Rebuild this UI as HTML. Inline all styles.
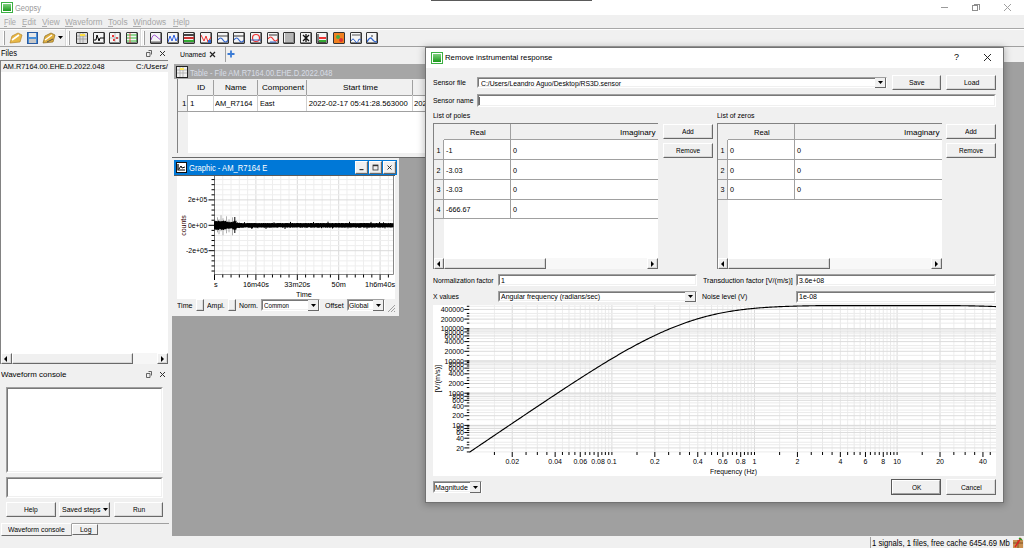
<!DOCTYPE html>
<html><head><meta charset="utf-8"><style>
html,body{margin:0;padding:0;}
body{width:1024px;height:548px;overflow:hidden;position:relative;background:#f0f0f0;font-family:"Liberation Sans", sans-serif;}
.a{position:absolute;}
.t{white-space:pre;}
.ti{width:12px;height:12px;box-sizing:border-box;border:1px solid #333;border-radius:1px;background:#f4f4f4;box-shadow:inset -1px -1px 0 #888;}
.ti svg{position:absolute;left:0px;top:0px;}
</style></head><body>
<div class="a" style="left:0px;top:0px;width:1024px;height:15px;background:#ffffff;"></div>
<div class="a" style="left:0px;top:15px;width:1024px;height:532px;background:#f0f0f0;"></div>
<div class="a" style="left:431px;top:0px;width:161px;height:1px;background:#5a5a5a;"></div>
<div class="a" style="left:1px;top:2px;width:12px;height:11px;box-sizing:border-box;background:#fff;border:1px solid #3cb043;"></div>
<div class="a" style="left:3px;top:4px;width:8px;height:7px;box-sizing:border-box;background:linear-gradient(180deg,#7fd07f,#1a9a1a);"></div>
<div class="a t" style="left:15.00px;top:3.89px;font-size:8.4px;line-height:8.4px;color:#9a9a9a;transform:scaleX(0.898);transform-origin:0 0;">Geopsy</div>
<div class="a" style="left:941px;top:7px;width:7px;height:1px;background:#9a9a9a;"></div>
<div class="a" style="left:972px;top:5px;width:6px;height:6px;box-sizing:border-box;border:1px solid #8e8e8e;"></div>
<div class="a" style="left:974px;top:4px;width:6px;height:6px;box-sizing:border-box;border-top:1px solid #8e8e8e;border-right:1px solid #8e8e8e;"></div>
<svg class="a" style="left:1003px;top:3px" width="9" height="9"><path d="M1 1L8 8M8 1L1 8" stroke="#a0a0a0" stroke-width="1"/></svg>
<div class="a t" style="left:3.60px;top:18.10px;font-size:8.5px;line-height:8.5px;color:#a6a6a6;transform:scaleX(0.876);transform-origin:0 0;">File</div>
<div class="a" style="left:3.6px;top:26px;width:3px;height:1px;background:#b0b0b0;"></div>
<div class="a t" style="left:22.00px;top:18.10px;font-size:8.5px;line-height:8.5px;color:#a6a6a6;transform:scaleX(0.956);transform-origin:0 0;">Edit</div>
<div class="a" style="left:22px;top:26px;width:4px;height:1px;background:#b0b0b0;"></div>
<div class="a t" style="left:42.00px;top:18.10px;font-size:8.5px;line-height:8.5px;color:#a6a6a6;transform:scaleX(0.974);transform-origin:0 0;">View</div>
<div class="a" style="left:42px;top:26px;width:5px;height:1px;background:#b0b0b0;"></div>
<div class="a t" style="left:65.00px;top:18.10px;font-size:8.5px;line-height:8.5px;color:#a6a6a6;transform:scaleX(0.976);transform-origin:0 0;">Waveform</div>
<div class="a" style="left:65px;top:26px;width:8px;height:1px;background:#b0b0b0;"></div>
<div class="a t" style="left:107.80px;top:18.10px;font-size:8.5px;line-height:8.5px;color:#a6a6a6;transform:scaleX(0.988);transform-origin:0 0;">Tools</div>
<div class="a" style="left:107.8px;top:26px;width:5px;height:1px;background:#b0b0b0;"></div>
<div class="a t" style="left:133.20px;top:18.10px;font-size:8.5px;line-height:8.5px;color:#a6a6a6;transform:scaleX(0.963);transform-origin:0 0;">Windows</div>
<div class="a" style="left:133.2px;top:26px;width:8px;height:1px;background:#b0b0b0;"></div>
<div class="a t" style="left:172.80px;top:18.10px;font-size:8.5px;line-height:8.5px;color:#a6a6a6;transform:scaleX(0.950);transform-origin:0 0;">Help</div>
<div class="a" style="left:172.8px;top:26px;width:5px;height:1px;background:#b0b0b0;"></div>
<div class="a" style="left:0px;top:28px;width:1024px;height:1px;background:#a8a8a8;"></div>
<div class="a" style="left:0px;top:29px;width:1024px;height:1px;background:#ffffff;"></div>
<div class="a" style="left:0px;top:46px;width:1024px;height:1px;background:#a0a0a0;"></div>
<div class="a" style="left:3px;top:31px;width:1px;height:14px;background:#ffffff;"></div>
<div class="a" style="left:4px;top:31px;width:1px;height:14px;background:#a0a0a0;"></div>
<svg class="a" style="left:9px;top:31px" width="14" height="14"><path d="M1 12 L3 5 L9 2 L13 4 L11 11 Z" fill="#e8b845" stroke="#b8862a" stroke-width="0.7"/><path d="M3 9 L10 4" stroke="#fff" stroke-width="1.6"/></svg>
<svg class="a" style="left:27px;top:32px" width="11" height="12"><rect x="0.5" y="0.5" width="10" height="11" fill="#4a90d9" stroke="#2a5aa0"/><rect x="2" y="1" width="7" height="4" fill="#e8e8e8"/><rect x="2" y="7" width="7" height="4" fill="#c8c8c8"/></svg>
<svg class="a" style="left:42px;top:31px" width="14" height="14"><path d="M1 12 L3 5 L9 2 L13 4 L11 11 Z" fill="#e0b040" stroke="#8a6a20" stroke-width="0.7"/><path d="M3 9 L10 4" stroke="#fff" stroke-width="1.4"/><path d="M5 11 L11 8" stroke="#555" stroke-width="1"/></svg>
<svg class="a" style="left:58px;top:36px" width="6" height="4"><path d="M0 0H5L2.5 3Z" fill="#000"/></svg>
<div class="a" style="left:65px;top:29px;width:1px;height:17px;background:#d8d8d8;"></div>
<div class="a" style="left:66px;top:29px;width:1px;height:17px;background:#ffffff;"></div>
<div class="a" style="left:68px;top:31px;width:1px;height:14px;background:#ffffff;"></div>
<div class="a" style="left:69px;top:31px;width:1px;height:14px;background:#a0a0a0;"></div>
<div class="a ti" style="left:76px;top:32px"><svg width="10" height="10"><rect x="0" y="0" width="10" height="10" fill="#ddd"/><path d="M0 3H10M0 6H10M3 0V10M6 0V10" stroke="#999" stroke-width="0.8"/><rect x="3" y="1" width="5" height="2" fill="#ffe040"/></svg></div>
<div class="a ti" style="left:93px;top:32px"><svg width="10" height="10"><path d="M0 7L2 7L3 2L5 8L6 5L10 5" stroke="#000" fill="none" stroke-width="1"/></svg></div>
<div class="a ti" style="left:109px;top:32px"><svg width="10" height="10"><path d="M2 2h2v2h-2zM6 4h2v2h-2zM3 6h2v2h-2z" fill="#e33"/><path d="M0 5H10M5 0V10" stroke="#999" stroke-width="0.6"/></svg></div>
<div class="a ti" style="left:126px;top:32px"><svg width="10" height="10"><path d="M0 2H10M0 5H10M0 8H10" stroke="#3b3" stroke-width="1"/><path d="M3 0V10" stroke="#e33" stroke-width="0.8"/></svg></div>
<div class="a" style="left:140px;top:29px;width:1px;height:17px;background:#d8d8d8;"></div>
<div class="a" style="left:141px;top:29px;width:1px;height:17px;background:#ffffff;"></div>
<div class="a" style="left:143px;top:31px;width:1px;height:14px;background:#ffffff;"></div>
<div class="a" style="left:144px;top:31px;width:1px;height:14px;background:#a0a0a0;"></div>
<div class="a ti" style="left:150px;top:32px"><svg width="10" height="10"><path d="M0 7Q2 0 5 3T10 7" stroke="#a050d0" fill="none"/><path d="M0 9H10" stroke="#666"/></svg></div>
<div class="a ti" style="left:167px;top:32px"><svg width="10" height="10"><path d="M0 9L2 3L4 8L6 2L8 8L10 4" stroke="#3060e0" fill="none"/></svg></div>
<div class="a ti" style="left:183px;top:32px"><svg width="10" height="10"><rect x="0" y="1" width="10" height="2" fill="#444"/><rect x="0" y="4" width="10" height="2" fill="#c33"/><rect x="0" y="7" width="10" height="2" fill="#3a3"/></svg></div>
<div class="a ti" style="left:200px;top:32px"><svg width="10" height="10"><path d="M0 2L3 8L5 3L7 9L10 4" stroke="#e33" fill="none"/><rect x="7" y="7" width="3" height="3" fill="#36c"/></svg></div>
<div class="a ti" style="left:217px;top:32px"><svg width="10" height="10"><path d="M0 3H10" stroke="#444"/><path d="M0 7Q2.5 3 5 7T10 7" stroke="#36c" fill="none" stroke-width="1.2"/></svg></div>
<div class="a ti" style="left:233px;top:32px"><svg width="10" height="10"><path d="M0 3H10" stroke="#333"/><path d="M0 7Q2.5 3 5 7T10 7" stroke="#36c" fill="none" stroke-width="1.2"/></svg></div>
<div class="a ti" style="left:250px;top:32px"><svg width="10" height="10"><circle cx="5" cy="5" r="3.5" stroke="#e33" fill="none" stroke-width="1.2"/><path d="M0 7H10" stroke="#36c"/></svg></div>
<div class="a ti" style="left:267px;top:32px"><svg width="10" height="10"><path d="M1 2H9" stroke="#333"/><path d="M0 6Q2.5 2 5 6T10 6" stroke="#e33" fill="none" stroke-width="1.2"/><path d="M2 9H8" stroke="#36c"/></svg></div>
<div class="a ti" style="left:283px;top:32px"><svg width="10" height="10"><path d="M1 1H9M1 3H9M1 5H9M1 7H9M1 9H9" stroke="#555" stroke-width="0.8"/></svg></div>
<div class="a ti" style="left:300px;top:32px"><svg width="10" height="10"><path d="M2 2L8 8M8 2L2 8M5 1V9" stroke="#111" stroke-width="1.3"/></svg></div>
<div class="a ti" style="left:316px;top:32px"><svg width="10" height="10"><path d="M1 1V9H9" stroke="#111" fill="none"/><rect x="2" y="4" width="7" height="2" fill="#e33"/><rect x="2" y="7" width="7" height="2" fill="#3a3"/></svg></div>
<div class="a ti" style="left:333px;top:32px"><svg width="10" height="10"><rect width="10" height="10" fill="#f08020"/><circle cx="4" cy="4" r="2" fill="#4a4"/><circle cx="7" cy="7" r="2" fill="#d33"/></svg></div>
<div class="a ti" style="left:350px;top:32px"><svg width="10" height="10"><path d="M1 2H9" stroke="#555"/><path d="M0 8Q2 4 4 8T8 6L10 7" stroke="#36c" fill="none"/></svg></div>
<div class="a ti" style="left:366px;top:32px"><svg width="10" height="10"><path d="M0 9Q3 3 5 6T10 9" stroke="#36c" fill="none" stroke-width="1.3"/><circle cx="5" cy="3" r="1" fill="#777"/></svg></div>
<div class="a t" style="left:1.00px;top:50.06px;font-size:8.2px;line-height:8.2px;color:#000;transform:scaleX(0.924);transform-origin:0 0;">Files</div>
<svg class="a" style="left:146px;top:50px" width="6" height="7"><path d="M2.5 0.5H5.5V4.5M0.5 2.5H4V6.5H0.5Z" stroke="#555" fill="none" stroke-width="0.9"/></svg>
<svg class="a" style="left:158.5px;top:50px" width="7" height="7"><path d="M1 1L6 6M6 1L1 6" stroke="#333" stroke-width="1"/></svg>
<div class="a" style="left:0px;top:60px;width:168px;height:304px;box-sizing:border-box;background:#fff;border-top:1px solid #828282;border-left:1px solid #828282;"></div>
<div class="a" style="left:1px;top:61px;width:167px;height:11px;background:#f0f0f0;"></div>
<div class="a t" style="left:3.00px;top:62.53px;font-size:8px;line-height:8px;color:#000;transform:scaleX(0.913);transform-origin:0 0;">AM.R7164.00.EHE.D.2022.048</div>
<div class="a t" style="left:136.00px;top:62.53px;font-size:8px;line-height:8px;color:#000;transform:scaleX(0.960);transform-origin:0 0;">C:/Users/</div>
<div class="a" style="left:1px;top:353px;width:167px;height:11px;background:#f0f0f0;"></div>
<div class="a" style="left:1px;top:353px;width:11px;height:11px;box-sizing:border-box;background:#f0f0f0;border-top:1px solid #fff;border-left:1px solid #fff;border-right:1px solid #696969;border-bottom:1px solid #696969;"></div>
<div class="a" style="left:2px;top:354px;width:9px;height:9px;box-sizing:border-box;border-right:1px solid #d8d8d8;border-bottom:1px solid #d8d8d8;"></div>
<svg class="a" style="left:4px;top:356px" width="4" height="6"><path d="M3 0V6L0 3Z" fill="#000"/></svg>
<div class="a" style="left:12px;top:353px;width:121px;height:11px;box-sizing:border-box;background:#f0f0f0;border-top:1px solid #fff;border-left:1px solid #fff;border-right:1px solid #696969;border-bottom:1px solid #696969;"></div>
<div class="a" style="left:13px;top:354px;width:119px;height:9px;box-sizing:border-box;border-right:1px solid #d8d8d8;border-bottom:1px solid #d8d8d8;"></div>
<div class="a" style="left:133px;top:353px;width:24px;height:11px;background:#f6f6f6;"></div>
<div class="a" style="left:157px;top:353px;width:11px;height:11px;box-sizing:border-box;background:#f0f0f0;border-top:1px solid #fff;border-left:1px solid #fff;border-right:1px solid #696969;border-bottom:1px solid #696969;"></div>
<div class="a" style="left:158px;top:354px;width:9px;height:9px;box-sizing:border-box;border-right:1px solid #d8d8d8;border-bottom:1px solid #d8d8d8;"></div>
<svg class="a" style="left:161px;top:356px" width="4" height="6"><path d="M0 0V6L3 3Z" fill="#000"/></svg>
<div class="a t" style="left:1.00px;top:371.14px;font-size:8.1px;line-height:8.1px;color:#000;transform:scaleX(0.981);transform-origin:0 0;">Waveform console</div>
<svg class="a" style="left:146px;top:371px" width="6" height="7"><path d="M2.5 0.5H5.5V4.5M0.5 2.5H4V6.5H0.5Z" stroke="#555" fill="none" stroke-width="0.9"/></svg>
<svg class="a" style="left:158.5px;top:371px" width="7" height="7"><path d="M1 1L6 6M6 1L1 6" stroke="#333" stroke-width="1"/></svg>
<div class="a" style="left:6px;top:387px;width:157px;height:86px;box-sizing:border-box;background:#fff;border-top:1px solid #a0a0a0;border-left:1px solid #a0a0a0;border-right:1px solid #fff;border-bottom:1px solid #fff;"></div>
<div class="a" style="left:7px;top:388px;width:155px;height:84px;box-sizing:border-box;border-top:1px solid #787878;border-left:1px solid #787878;border-right:1px solid #f0f0f0;border-bottom:1px solid #f0f0f0;"></div>
<div class="a" style="left:6px;top:477px;width:157px;height:21px;box-sizing:border-box;background:#fff;border-top:1px solid #a0a0a0;border-left:1px solid #a0a0a0;border-right:1px solid #fff;border-bottom:1px solid #fff;"></div>
<div class="a" style="left:7px;top:478px;width:155px;height:19px;box-sizing:border-box;border-top:1px solid #787878;border-left:1px solid #787878;border-right:1px solid #f0f0f0;border-bottom:1px solid #f0f0f0;"></div>
<div class="a" style="left:6px;top:502px;width:50px;height:15px;box-sizing:border-box;background:#f0f0f0;border-top:1px solid #fff;border-left:1px solid #fff;border-right:1px solid #696969;border-bottom:1px solid #696969;"></div>
<div class="a" style="left:7px;top:503px;width:48px;height:13px;box-sizing:border-box;border-right:1px solid #d8d8d8;border-bottom:1px solid #d8d8d8;"></div>
<div class="a t" style="left:24.10px;top:506.24px;font-size:7.4px;line-height:7.4px;color:#000;transform:scaleX(0.900);transform-origin:0 0;">Help</div>
<div class="a" style="left:59px;top:502px;width:51px;height:15px;box-sizing:border-box;background:#f0f0f0;border-top:1px solid #fff;border-left:1px solid #fff;border-right:1px solid #696969;border-bottom:1px solid #696969;"></div>
<div class="a" style="left:60px;top:503px;width:49px;height:13px;box-sizing:border-box;border-right:1px solid #d8d8d8;border-bottom:1px solid #d8d8d8;"></div>
<div class="a t" style="left:61.90px;top:506.24px;font-size:7.4px;line-height:7.4px;color:#000;transform:scaleX(0.945);transform-origin:0 0;">Saved steps</div>
<svg class="a" style="left:102.5px;top:508px" width="5" height="3"><path d="M0 0H5L2.5 3Z" fill="#000"/></svg>
<div class="a" style="left:114px;top:502px;width:49px;height:15px;box-sizing:border-box;background:#f0f0f0;border-top:1px solid #fff;border-left:1px solid #fff;border-right:1px solid #696969;border-bottom:1px solid #696969;"></div>
<div class="a" style="left:115px;top:503px;width:47px;height:13px;box-sizing:border-box;border-right:1px solid #d8d8d8;border-bottom:1px solid #d8d8d8;"></div>
<div class="a t" style="left:132.60px;top:506.24px;font-size:7.4px;line-height:7.4px;color:#000;transform:scaleX(0.899);transform-origin:0 0;">Run</div>
<div class="a" style="left:71px;top:523px;width:98px;height:1px;background:#a0a0a0;"></div>
<div class="a" style="left:1px;top:523px;width:71px;height:13px;box-sizing:border-box;background:#f0f0f0;border-top:1px solid #fff;border-left:1px solid #fff;border-right:1px solid #a0a0a0;border-bottom:1px solid #696969;"></div>
<div class="a t" style="left:8.00px;top:525.74px;font-size:7.4px;line-height:7.4px;color:#000;transform:scaleX(0.931);transform-origin:0 0;">Waveform console</div>
<div class="a" style="left:72px;top:524px;width:26px;height:11px;box-sizing:border-box;background:#f0f0f0;border-top:1px solid #fff;border-left:1px solid #fff;border-right:1px solid #696969;border-bottom:1px solid #696969;"></div>
<div class="a t" style="left:80.40px;top:525.74px;font-size:7.4px;line-height:7.4px;color:#000;transform:scaleX(0.939);transform-origin:0 0;">Log</div>
<div class="a" style="left:172px;top:47px;width:54px;height:15px;box-sizing:border-box;background:#f0f0f0;border-right:1px solid #a0a0a0;"></div>
<div class="a t" style="left:179.60px;top:50.53px;font-size:8px;line-height:8px;color:#000;transform:scaleX(0.853);transform-origin:0 0;">Unamed</div>
<svg class="a" style="left:209px;top:51px" width="7" height="7"><path d="M1 1L6 6M6 1L1 6" stroke="#222" stroke-width="1.2"/></svg>
<svg class="a" style="left:227px;top:50px" width="8" height="8"><path d="M4 0.5V7.5M0.5 4H7.5" stroke="#3a7bd5" stroke-width="1.8"/></svg>
<div class="a" style="left:172px;top:62px;width:852px;height:474px;background:#a0a0a0;"></div>
<div class="a" style="left:172px;top:62px;width:831px;height:96px;background:#f0f0f0;"></div>
<div class="a" style="left:174px;top:64px;width:829px;height:15px;background:#a6a6a6;"></div>
<div class="a" style="left:172px;top:157px;width:254px;height:1px;background:#696969;"></div>
<div class="a" style="left:176px;top:66px;width:12px;height:12px;box-sizing:border-box;background:#eee;border:1px solid #222;"></div>
<svg class="a" style="left:177px;top:67px" width="10" height="10"><path d="M0 3H10M0 6H10M3 0V10M6 0V10" stroke="#aaa" stroke-width="0.8"/><rect x="3" y="1" width="4" height="2" fill="#ffe860"/></svg>
<div class="a t" style="left:189.70px;top:68.97px;font-size:8.3px;line-height:8.3px;color:#d8dde6;transform:scaleX(0.903);transform-origin:0 0;">Table - File AM.R7164.00.EHE.D.2022.048</div>
<div class="a" style="left:177px;top:79px;width:250px;height:74px;background:#fff;"></div>
<div class="a" style="left:177px;top:79px;width:1px;height:74px;background:#828282;"></div>
<div class="a" style="left:178px;top:79px;width:249px;height:16px;background:#f0f0f0;"></div>
<div class="a" style="left:178px;top:95px;width:10px;height:58px;background:#f0f0f0;"></div>
<div class="a" style="left:188px;top:95px;width:239px;height:1px;background:#a0a0a0;"></div>
<div class="a" style="left:178px;top:111px;width:249px;height:1px;background:#a0a0a0;"></div>
<div class="a" style="left:213px;top:80px;width:1px;height:15px;background:#a0a0a0;"></div>
<div class="a" style="left:213px;top:95px;width:1px;height:16px;background:#d0d0d0;"></div>
<div class="a" style="left:257px;top:80px;width:1px;height:15px;background:#a0a0a0;"></div>
<div class="a" style="left:257px;top:95px;width:1px;height:16px;background:#d0d0d0;"></div>
<div class="a" style="left:306px;top:80px;width:1px;height:15px;background:#a0a0a0;"></div>
<div class="a" style="left:306px;top:95px;width:1px;height:16px;background:#d0d0d0;"></div>
<div class="a" style="left:412px;top:80px;width:1px;height:15px;background:#a0a0a0;"></div>
<div class="a" style="left:412px;top:95px;width:1px;height:16px;background:#d0d0d0;"></div>
<div class="a" style="left:187px;top:95px;width:1px;height:16px;background:#a0a0a0;"></div>
<div class="a t" style="left:196.70px;top:84.23px;font-size:8px;line-height:8px;color:#000;transform:scaleX(1.038);transform-origin:0 0;">ID</div>
<div class="a t" style="left:225.20px;top:84.23px;font-size:8px;line-height:8px;color:#000;transform:scaleX(1.007);transform-origin:0 0;">Name</div>
<div class="a t" style="left:261.70px;top:84.23px;font-size:8px;line-height:8px;color:#000;transform:scaleX(1.015);transform-origin:0 0;">Component</div>
<div class="a t" style="left:342.60px;top:84.23px;font-size:8px;line-height:8px;color:#000;transform:scaleX(1.020);transform-origin:0 0;">Start time</div>
<div class="a t" style="left:182.00px;top:100.23px;font-size:8px;line-height:8px;color:#000;">1</div>
<div class="a t" style="left:190.00px;top:100.23px;font-size:8px;line-height:8px;color:#000;">1</div>
<div class="a t" style="left:215.40px;top:100.23px;font-size:8px;line-height:8px;color:#000;transform:scaleX(0.937);transform-origin:0 0;">AM_R7164</div>
<div class="a t" style="left:259.90px;top:100.23px;font-size:8px;line-height:8px;color:#000;transform:scaleX(0.906);transform-origin:0 0;">East</div>
<div class="a t" style="left:308.70px;top:100.48px;font-size:7.7px;line-height:7.7px;color:#000;">2022-02-17 05:41:28.563000</div>
<div class="a t" style="left:414.00px;top:100.48px;font-size:7.7px;line-height:7.7px;color:#000;">2022</div>
<div class="a" style="left:172px;top:158px;width:227px;height:158px;background:#f0f0f0;"></div>
<div class="a" style="left:174px;top:160px;width:223px;height:15px;background:#0078d7;"></div>
<div class="a" style="left:176px;top:162px;width:11px;height:11px;box-sizing:border-box;background:#fff;border:1px solid #111;"></div>
<svg class="a" style="left:177px;top:163px" width="9" height="9"><path d="M1 1V7H8" stroke="#000" fill="none" stroke-width="1.2"/><path d="M2 6L4 3L5 5L8 4" stroke="#000" fill="none"/></svg>
<div class="a t" style="left:188.90px;top:164.27px;font-size:8.3px;line-height:8.3px;color:#ffffff;transform:scaleX(0.919);transform-origin:0 0;">Graphic - AM_R7164 E</div>
<div class="a" style="left:355px;top:161px;width:13px;height:13px;box-sizing:border-box;background:#f0f0f0;border-top:1px solid #fff;border-left:1px solid #fff;border-right:1px solid #696969;border-bottom:1px solid #696969;"></div>
<div class="a" style="left:356px;top:162px;width:11px;height:11px;box-sizing:border-box;border-right:1px solid #d8d8d8;border-bottom:1px solid #d8d8d8;"></div>
<div class="a" style="left:369px;top:161px;width:13px;height:13px;box-sizing:border-box;background:#f0f0f0;border-top:1px solid #fff;border-left:1px solid #fff;border-right:1px solid #696969;border-bottom:1px solid #696969;"></div>
<div class="a" style="left:370px;top:162px;width:11px;height:11px;box-sizing:border-box;border-right:1px solid #d8d8d8;border-bottom:1px solid #d8d8d8;"></div>
<div class="a" style="left:383px;top:161px;width:13px;height:13px;box-sizing:border-box;background:#f0f0f0;border-top:1px solid #fff;border-left:1px solid #fff;border-right:1px solid #696969;border-bottom:1px solid #696969;"></div>
<div class="a" style="left:384px;top:162px;width:11px;height:11px;box-sizing:border-box;border-right:1px solid #d8d8d8;border-bottom:1px solid #d8d8d8;"></div>
<svg class="a" style="left:358px;top:164px" width="7" height="7"><rect x="1.5" y="5" width="4" height="1.2" fill="#333"/></svg>
<svg class="a" style="left:372px;top:164px" width="7" height="7"><rect x="1" y="1" width="5" height="5" fill="none" stroke="#333" stroke-width="0.8"/><rect x="1" y="1" width="5" height="1.2" fill="#333"/></svg>
<svg class="a" style="left:386px;top:164px" width="7" height="7"><path d="M1.5 1.5L5.5 5.5M5.5 1.5L1.5 5.5" stroke="#333" stroke-width="1"/></svg>
<div class="a" style="left:177px;top:175px;width:218px;height:124px;background:#ffffff;"></div>
<div class="a" style="left:174px;top:175px;width:221px;height:1px;background:#5a5a5a;"></div>
<svg class="a" style="left:0;top:0" width="1024" height="548"><line x1="222.78" y1="176.00" x2="222.78" y2="274.50" stroke="#eeeeee" stroke-width="1"/><line x1="231.06" y1="176.00" x2="231.06" y2="274.50" stroke="#eeeeee" stroke-width="1"/><line x1="239.34" y1="176.00" x2="239.34" y2="274.50" stroke="#eeeeee" stroke-width="1"/><line x1="247.62" y1="176.00" x2="247.62" y2="274.50" stroke="#eeeeee" stroke-width="1"/><line x1="255.90" y1="176.00" x2="255.90" y2="274.50" stroke="#dadada" stroke-width="1"/><line x1="264.18" y1="176.00" x2="264.18" y2="274.50" stroke="#eeeeee" stroke-width="1"/><line x1="272.46" y1="176.00" x2="272.46" y2="274.50" stroke="#eeeeee" stroke-width="1"/><line x1="280.74" y1="176.00" x2="280.74" y2="274.50" stroke="#eeeeee" stroke-width="1"/><line x1="289.02" y1="176.00" x2="289.02" y2="274.50" stroke="#eeeeee" stroke-width="1"/><line x1="297.30" y1="176.00" x2="297.30" y2="274.50" stroke="#dadada" stroke-width="1"/><line x1="305.58" y1="176.00" x2="305.58" y2="274.50" stroke="#eeeeee" stroke-width="1"/><line x1="313.86" y1="176.00" x2="313.86" y2="274.50" stroke="#eeeeee" stroke-width="1"/><line x1="322.14" y1="176.00" x2="322.14" y2="274.50" stroke="#eeeeee" stroke-width="1"/><line x1="330.42" y1="176.00" x2="330.42" y2="274.50" stroke="#eeeeee" stroke-width="1"/><line x1="338.70" y1="176.00" x2="338.70" y2="274.50" stroke="#dadada" stroke-width="1"/><line x1="346.98" y1="176.00" x2="346.98" y2="274.50" stroke="#eeeeee" stroke-width="1"/><line x1="355.26" y1="176.00" x2="355.26" y2="274.50" stroke="#eeeeee" stroke-width="1"/><line x1="363.54" y1="176.00" x2="363.54" y2="274.50" stroke="#eeeeee" stroke-width="1"/><line x1="371.82" y1="176.00" x2="371.82" y2="274.50" stroke="#eeeeee" stroke-width="1"/><line x1="380.10" y1="176.00" x2="380.10" y2="274.50" stroke="#dadada" stroke-width="1"/><line x1="388.38" y1="176.00" x2="388.38" y2="274.50" stroke="#eeeeee" stroke-width="1"/><line x1="214.50" y1="179.58" x2="393.50" y2="179.58" stroke="#eeeeee" stroke-width="1"/><line x1="214.50" y1="184.66" x2="393.50" y2="184.66" stroke="#eeeeee" stroke-width="1"/><line x1="214.50" y1="189.74" x2="393.50" y2="189.74" stroke="#eeeeee" stroke-width="1"/><line x1="214.50" y1="194.82" x2="393.50" y2="194.82" stroke="#eeeeee" stroke-width="1"/><line x1="214.50" y1="199.90" x2="393.50" y2="199.90" stroke="#dadada" stroke-width="1"/><line x1="214.50" y1="204.98" x2="393.50" y2="204.98" stroke="#eeeeee" stroke-width="1"/><line x1="214.50" y1="210.06" x2="393.50" y2="210.06" stroke="#eeeeee" stroke-width="1"/><line x1="214.50" y1="215.14" x2="393.50" y2="215.14" stroke="#eeeeee" stroke-width="1"/><line x1="214.50" y1="220.22" x2="393.50" y2="220.22" stroke="#eeeeee" stroke-width="1"/><line x1="214.50" y1="225.30" x2="393.50" y2="225.30" stroke="#dadada" stroke-width="1"/><line x1="214.50" y1="230.38" x2="393.50" y2="230.38" stroke="#eeeeee" stroke-width="1"/><line x1="214.50" y1="235.46" x2="393.50" y2="235.46" stroke="#eeeeee" stroke-width="1"/><line x1="214.50" y1="240.54" x2="393.50" y2="240.54" stroke="#eeeeee" stroke-width="1"/><line x1="214.50" y1="245.62" x2="393.50" y2="245.62" stroke="#eeeeee" stroke-width="1"/><line x1="214.50" y1="250.70" x2="393.50" y2="250.70" stroke="#dadada" stroke-width="1"/><line x1="214.50" y1="255.78" x2="393.50" y2="255.78" stroke="#eeeeee" stroke-width="1"/><line x1="214.50" y1="260.86" x2="393.50" y2="260.86" stroke="#eeeeee" stroke-width="1"/><line x1="214.50" y1="265.94" x2="393.50" y2="265.94" stroke="#eeeeee" stroke-width="1"/><line x1="214.50" y1="271.02" x2="393.50" y2="271.02" stroke="#eeeeee" stroke-width="1"/><line x1="214.50" y1="176.00" x2="214.50" y2="275.00" stroke="#707070" stroke-width="1"/><line x1="214.50" y1="274.50" x2="393.50" y2="274.50" stroke="#888" stroke-width="1"/><line x1="393.50" y1="176.00" x2="393.50" y2="274.50" stroke="#888" stroke-width="1"/><line x1="211.50" y1="179.58" x2="214.50" y2="179.58" stroke="#000" stroke-width="1"/><line x1="211.50" y1="184.66" x2="214.50" y2="184.66" stroke="#000" stroke-width="1"/><line x1="211.50" y1="189.74" x2="214.50" y2="189.74" stroke="#000" stroke-width="1"/><line x1="211.50" y1="194.82" x2="214.50" y2="194.82" stroke="#000" stroke-width="1"/><line x1="208.50" y1="199.90" x2="214.50" y2="199.90" stroke="#000" stroke-width="1"/><line x1="211.50" y1="204.98" x2="214.50" y2="204.98" stroke="#000" stroke-width="1"/><line x1="211.50" y1="210.06" x2="214.50" y2="210.06" stroke="#000" stroke-width="1"/><line x1="211.50" y1="215.14" x2="214.50" y2="215.14" stroke="#000" stroke-width="1"/><line x1="211.50" y1="220.22" x2="214.50" y2="220.22" stroke="#000" stroke-width="1"/><line x1="208.50" y1="225.30" x2="214.50" y2="225.30" stroke="#000" stroke-width="1"/><line x1="211.50" y1="230.38" x2="214.50" y2="230.38" stroke="#000" stroke-width="1"/><line x1="211.50" y1="235.46" x2="214.50" y2="235.46" stroke="#000" stroke-width="1"/><line x1="211.50" y1="240.54" x2="214.50" y2="240.54" stroke="#000" stroke-width="1"/><line x1="211.50" y1="245.62" x2="214.50" y2="245.62" stroke="#000" stroke-width="1"/><line x1="208.50" y1="250.70" x2="214.50" y2="250.70" stroke="#000" stroke-width="1"/><line x1="211.50" y1="255.78" x2="214.50" y2="255.78" stroke="#000" stroke-width="1"/><line x1="211.50" y1="260.86" x2="214.50" y2="260.86" stroke="#000" stroke-width="1"/><line x1="211.50" y1="265.94" x2="214.50" y2="265.94" stroke="#000" stroke-width="1"/><line x1="211.50" y1="271.02" x2="214.50" y2="271.02" stroke="#000" stroke-width="1"/><line x1="214.50" y1="274.50" x2="214.50" y2="280.00" stroke="#000" stroke-width="1"/><line x1="222.78" y1="274.50" x2="222.78" y2="277.50" stroke="#000" stroke-width="1"/><line x1="231.06" y1="274.50" x2="231.06" y2="277.50" stroke="#000" stroke-width="1"/><line x1="239.34" y1="274.50" x2="239.34" y2="277.50" stroke="#000" stroke-width="1"/><line x1="247.62" y1="274.50" x2="247.62" y2="277.50" stroke="#000" stroke-width="1"/><line x1="255.90" y1="274.50" x2="255.90" y2="280.00" stroke="#000" stroke-width="1"/><line x1="264.18" y1="274.50" x2="264.18" y2="277.50" stroke="#000" stroke-width="1"/><line x1="272.46" y1="274.50" x2="272.46" y2="277.50" stroke="#000" stroke-width="1"/><line x1="280.74" y1="274.50" x2="280.74" y2="277.50" stroke="#000" stroke-width="1"/><line x1="289.02" y1="274.50" x2="289.02" y2="277.50" stroke="#000" stroke-width="1"/><line x1="297.30" y1="274.50" x2="297.30" y2="280.00" stroke="#000" stroke-width="1"/><line x1="305.58" y1="274.50" x2="305.58" y2="277.50" stroke="#000" stroke-width="1"/><line x1="313.86" y1="274.50" x2="313.86" y2="277.50" stroke="#000" stroke-width="1"/><line x1="322.14" y1="274.50" x2="322.14" y2="277.50" stroke="#000" stroke-width="1"/><line x1="330.42" y1="274.50" x2="330.42" y2="277.50" stroke="#000" stroke-width="1"/><line x1="338.70" y1="274.50" x2="338.70" y2="280.00" stroke="#000" stroke-width="1"/><line x1="346.98" y1="274.50" x2="346.98" y2="277.50" stroke="#000" stroke-width="1"/><line x1="355.26" y1="274.50" x2="355.26" y2="277.50" stroke="#000" stroke-width="1"/><line x1="363.54" y1="274.50" x2="363.54" y2="277.50" stroke="#000" stroke-width="1"/><line x1="371.82" y1="274.50" x2="371.82" y2="277.50" stroke="#000" stroke-width="1"/><line x1="380.10" y1="274.50" x2="380.10" y2="280.00" stroke="#000" stroke-width="1"/><line x1="388.38" y1="274.50" x2="388.38" y2="277.50" stroke="#000" stroke-width="1"/><path d="M217.5 217.3V232.3M219.0 219.3V234.3M221.0 215.3V231.3M223.0 218.3V235.3M226.5 216.3V233.3M229.0 219.3V232.3M232.5 217.3V235.3" stroke="#9a9a9a" stroke-width="0.8" fill="none"/><path d="M214.5 221.3V229.4M215.0 220.8V229.3M215.5 221.2V229.5M216.0 221.6V229.4M216.5 221.1V229.7M217.0 221.7V229.2M217.5 221.7V229.7M218.0 221.0V228.9M218.5 220.7V229.9M219.0 221.1V229.5M219.5 221.6V228.8M220.0 221.2V228.9M220.5 221.6V229.1M221.0 221.7V229.3M221.5 221.3V229.7M222.0 221.2V229.5M222.5 221.2V229.5M223.0 221.3V229.1M223.5 220.7V229.9M224.0 220.9V229.6M224.5 221.4V229.1M225.0 221.5V228.9M225.5 220.9V229.3M226.0 221.9V228.3M226.5 221.8V228.7M227.0 222.6V228.2M227.5 221.8V228.4M228.0 221.7V228.4M228.5 222.5V228.6M229.0 221.9V228.2M229.5 222.5V228.3M230.0 221.8V228.7M230.5 222.5V228.2M231.0 222.5V228.1M231.5 221.9V228.2M232.0 222.1V228.4M232.5 222.4V228.6M233.0 221.6V229.5M233.5 221.7V229.3M234.0 221.5V229.1M234.5 220.7V229.7M235.0 221.4V229.8M235.5 221.5V229.3M236.0 220.8V229.5M236.5 223.0V228.2M237.0 222.9V227.7M237.5 222.5V227.8M238.0 222.9V227.6M238.5 223.0V227.9M239.0 222.9V228.0M239.5 222.8V227.9M240.0 223.0V227.3M240.5 223.2V227.5M241.0 223.0V227.5M241.5 223.1V227.6M242.0 223.1V227.4M242.5 223.5V227.6M243.0 223.4V227.5M243.5 223.4V227.5M244.0 223.2V227.5M244.5 222.2V227.2M245.0 223.5V227.2M245.5 223.5V227.3M246.0 223.2V227.4M246.5 223.5V227.1M247.0 223.0V227.1M247.5 223.1V227.2M248.0 223.2V227.5M248.5 223.2V227.5M249.0 223.2V227.6M249.5 223.1V227.5M250.0 223.3V227.4M250.5 223.2V227.6M251.0 223.3V227.5M251.5 223.1V228.7M252.0 223.3V227.2M252.5 223.2V228.4M253.0 223.2V227.2M253.5 223.2V227.3M254.0 223.2V227.2M254.5 223.0V227.5M255.0 223.4V227.1M255.5 223.1V227.5M256.0 223.4V227.3M256.5 223.3V227.4M257.0 223.1V227.6M257.5 223.5V227.5M258.0 223.2V228.2M258.5 223.3V227.1M259.0 223.5V227.1M259.5 223.2V227.4M260.0 223.2V227.2M260.5 223.5V227.3M261.0 223.4V227.3M261.5 223.2V227.5M262.0 223.0V227.1M262.5 223.5V227.3M263.0 223.3V227.4M263.5 223.0V227.3M264.0 223.1V227.5M264.5 223.4V227.6M265.0 223.2V227.5M265.5 223.1V227.3M266.0 223.2V228.9M266.5 223.5V227.5M267.0 223.1V227.1M267.5 223.1V227.5M268.0 223.3V227.6M268.5 223.3V227.2M269.0 223.3V227.5M269.5 223.3V227.5M270.0 223.1V227.6M270.5 223.4V227.4M271.0 223.5V227.6M271.5 223.1V227.4M272.0 223.5V227.4M272.5 223.0V227.2M273.0 223.3V227.5M273.5 223.4V227.2M274.0 222.3V227.5M274.5 223.2V227.2M275.0 223.5V227.5M275.5 223.4V227.2M276.0 223.3V227.3M276.5 223.4V227.4M277.0 223.1V227.4M277.5 223.1V227.5M278.0 223.4V227.6M278.5 223.1V227.1M279.0 223.4V227.1M279.5 223.1V227.1M280.0 223.5V227.2M280.5 223.0V227.1M281.0 223.3V227.4M281.5 223.5V227.1M282.0 223.2V227.1M282.5 223.1V227.6M283.0 223.5V227.6M283.5 223.4V227.3M284.0 223.2V227.1M284.5 223.4V227.3M285.0 223.4V229.0M285.5 223.1V227.4M286.0 223.3V227.4M286.5 223.1V227.2M287.0 223.1V227.5M287.5 223.1V227.4M288.0 223.3V227.5M288.5 223.3V227.1M289.0 223.2V227.2M289.5 223.4V227.4M290.0 223.3V227.6M290.5 221.9V227.6M291.0 223.4V227.3M291.5 223.3V227.1M292.0 223.2V227.3M292.5 223.0V227.4M293.0 223.2V227.5M293.5 223.5V227.3M294.0 223.2V227.1M294.5 223.3V227.4M295.0 223.2V227.4M295.5 223.4V227.1M296.0 223.5V227.5M296.5 223.1V227.1M297.0 223.5V227.6M297.5 223.0V227.2M298.0 223.1V227.3M298.5 223.2V227.1M299.0 223.4V227.1M299.5 223.3V227.4M300.0 223.2V227.3M300.5 223.0V227.6M301.0 223.5V227.6M301.5 223.3V227.2M302.0 223.2V227.4M302.5 223.4V227.6M303.0 223.5V227.1M303.5 223.2V227.1M304.0 223.5V227.4M304.5 223.3V227.3M305.0 223.1V227.5M305.5 223.1V227.4M306.0 223.3V227.2M306.5 223.2V227.6M307.0 223.1V227.6M307.5 223.5V227.5M308.0 223.2V227.3M308.5 223.1V227.1M309.0 223.5V227.2M309.5 223.4V227.1M310.0 223.3V227.1M310.5 223.0V227.6M311.0 223.1V227.2M311.5 223.0V227.6M312.0 223.3V227.3M312.5 223.4V227.4M313.0 223.1V227.4M313.5 222.0V227.2M314.0 223.2V227.6M314.5 223.5V227.4M315.0 223.5V227.5M315.5 223.2V227.1M316.0 223.4V227.2M316.5 223.1V227.3M317.0 223.2V227.3M317.5 223.2V227.6M318.0 223.2V227.5M318.5 223.1V227.6M319.0 223.1V227.5M319.5 223.5V227.5M320.0 223.4V227.2M320.5 223.0V227.1M321.0 223.2V227.5M321.5 223.3V228.2M322.0 223.4V227.2M322.5 223.2V227.2M323.0 223.4V227.5M323.5 223.1V227.3M324.0 223.0V227.2M324.5 223.3V227.2M325.0 223.1V227.3M325.5 223.4V227.6M326.0 223.5V227.3M326.5 223.1V227.4M327.0 223.4V227.2M327.5 223.2V227.6M328.0 221.7V227.5M328.5 223.1V227.1M329.0 223.5V227.3M329.5 223.2V227.5M330.0 223.3V227.6M330.5 223.4V227.4M331.0 223.1V227.2M331.5 223.4V227.3M332.0 223.2V227.1M332.5 223.0V228.5M333.0 223.1V227.2M333.5 223.5V227.6M334.0 223.2V227.2M334.5 223.4V227.2M335.0 223.4V227.2M335.5 223.0V227.4M336.0 223.1V227.1M336.5 223.2V227.4M337.0 223.1V227.4M337.5 223.5V227.1M338.0 223.0V227.3M338.5 223.1V227.5M339.0 223.3V227.1M339.5 223.0V227.5M340.0 223.5V227.2M340.5 223.5V227.3M341.0 223.1V227.4M341.5 223.0V227.4M342.0 223.5V227.5M342.5 223.1V227.5M343.0 223.2V227.2M343.5 223.2V227.4M344.0 223.3V227.3M344.5 223.5V227.6M345.0 223.2V227.2M345.5 223.1V227.4M346.0 223.4V227.6M346.5 223.1V227.2M347.0 223.5V227.2M347.5 223.2V227.2M348.0 223.3V228.3M348.5 223.3V227.1M349.0 223.4V227.3M349.5 221.8V227.4M350.0 223.0V227.4M350.5 223.2V227.4M351.0 223.3V227.6M351.5 223.3V227.3M352.0 223.3V227.3M352.5 223.4V227.1M353.0 223.1V227.4M353.5 223.2V227.1M354.0 223.3V227.3M354.5 223.3V227.2M355.0 223.4V227.1M355.5 223.2V227.5M356.0 223.4V227.5M356.5 223.5V227.5M357.0 223.0V227.1M357.5 223.4V227.1M358.0 223.3V227.3M358.5 223.5V227.6M359.0 223.0V227.6M359.5 223.4V227.6M360.0 223.1V227.3M360.5 223.1V227.6M361.0 223.4V227.5M361.5 223.1V227.2M362.0 223.1V227.1M362.5 223.3V227.1M363.0 223.1V227.2M363.5 223.2V227.5M364.0 223.1V227.4M364.5 223.0V227.4M365.0 223.5V227.6M365.5 223.2V227.1M366.0 223.4V227.5M366.5 223.1V227.2M367.0 223.4V228.6M367.5 223.1V227.3M368.0 223.4V227.4M368.5 223.2V227.5M369.0 223.1V227.4M369.5 223.4V227.5M370.0 223.4V227.3M370.5 223.1V227.2M371.0 221.9V227.3M371.5 223.2V227.5M372.0 223.5V227.3M372.5 223.4V227.5M373.0 223.2V227.4M373.5 223.5V227.2M374.0 223.2V227.3M374.5 223.5V227.5M375.0 223.5V227.4M375.5 223.5V227.3M376.0 223.0V227.1M376.5 223.0V227.1M377.0 223.5V227.2M377.5 223.3V227.2M378.0 223.5V227.6M378.5 223.4V227.2M379.0 223.3V227.6M379.5 222.1V227.4M380.0 223.5V227.2M380.5 223.2V227.5M381.0 223.1V227.3M381.5 223.3V227.2M382.0 223.4V227.2M382.5 223.3V227.6M383.0 223.4V227.3M383.5 222.3V227.2M384.0 223.3V227.6M384.5 223.3V227.1M385.0 223.1V228.4M385.5 223.3V227.1M386.0 223.1V227.3M386.5 223.4V227.1M387.0 223.5V227.2M387.5 223.5V227.4M388.0 223.2V227.1M388.5 223.1V227.3M389.0 223.4V227.2M389.5 223.5V227.1M390.0 223.1V227.6M390.5 223.0V227.2M391.0 223.0V227.5M391.5 223.5V227.3M392.0 223.3V227.2M392.5 223.5V227.3M393.0 223.2V227.2M234.8 217V233" stroke="#000" stroke-width="1" fill="none"/></svg>
<div class="a t" style="left:188.40px;top:195.82px;font-size:7.3px;line-height:7.3px;color:#000;transform:scaleX(0.936);transform-origin:0 0;">2e+05</div>
<div class="a t" style="left:188.40px;top:221.82px;font-size:7.3px;line-height:7.3px;color:#000;transform:scaleX(0.936);transform-origin:0 0;">0e+00</div>
<div class="a t" style="left:185.80px;top:246.82px;font-size:7.3px;line-height:7.3px;color:#000;transform:scaleX(0.951);transform-origin:0 0;">-2e+05</div>
<div class="a t" style="left:162.5px;top:222px;font-size:7px;line-height:7px;color:#300;transform:rotate(-90deg);transform-origin:center;width:40px;text-align:center">counts</div>
<div class="a t" style="left:214.00px;top:280.82px;font-size:7.3px;line-height:7.3px;color:#000;">s</div>
<div class="a t" style="left:242.91px;top:280.82px;font-size:7.3px;line-height:7.3px;color:#000;">16m40s</div>
<div class="a t" style="left:284.31px;top:280.82px;font-size:7.3px;line-height:7.3px;color:#000;">33m20s</div>
<div class="a t" style="left:331.60px;top:280.82px;font-size:7.3px;line-height:7.3px;color:#000;">50m</div>
<div class="a t" style="left:365.08px;top:280.82px;font-size:7.3px;line-height:7.3px;color:#000;">1h6m40s</div>
<div class="a t" style="left:296.10px;top:291.15px;font-size:7.5px;line-height:7.5px;color:#000;transform:scaleX(0.964);transform-origin:0 0;">Time</div>
<div class="a t" style="left:177.30px;top:301.95px;font-size:7.5px;line-height:7.5px;color:#000;transform:scaleX(0.946);transform-origin:0 0;">Time</div>
<div class="a" style="left:196px;top:299px;width:8px;height:12px;box-sizing:border-box;background:#f0f0f0;border-top:1px solid #fff;border-left:1px solid #fff;border-right:1px solid #696969;border-bottom:1px solid #696969;"></div>
<div class="a" style="left:197px;top:300px;width:6px;height:10px;box-sizing:border-box;border-right:1px solid #d8d8d8;border-bottom:1px solid #d8d8d8;"></div>
<div class="a t" style="left:206.90px;top:301.95px;font-size:7.5px;line-height:7.5px;color:#000;transform:scaleX(0.923);transform-origin:0 0;">Ampl.</div>
<div class="a" style="left:228px;top:299px;width:8px;height:12px;box-sizing:border-box;background:#f0f0f0;border-top:1px solid #fff;border-left:1px solid #fff;border-right:1px solid #696969;border-bottom:1px solid #696969;"></div>
<div class="a" style="left:229px;top:300px;width:6px;height:10px;box-sizing:border-box;border-right:1px solid #d8d8d8;border-bottom:1px solid #d8d8d8;"></div>
<div class="a t" style="left:238.90px;top:301.95px;font-size:7.5px;line-height:7.5px;color:#000;transform:scaleX(0.926);transform-origin:0 0;">Norm.</div>
<div class="a" style="left:261px;top:299px;width:59px;height:12px;box-sizing:border-box;background:#fff;border-top:1px solid #a0a0a0;border-left:1px solid #a0a0a0;border-right:1px solid #fff;border-bottom:1px solid #fff;"></div>
<div class="a" style="left:262px;top:300px;width:57px;height:10px;box-sizing:border-box;border-top:1px solid #787878;border-left:1px solid #787878;border-right:1px solid #f0f0f0;border-bottom:1px solid #f0f0f0;"></div>
<div class="a t" style="left:263.80px;top:301.95px;font-size:7.5px;line-height:7.5px;color:#000;transform:scaleX(0.822);transform-origin:0 0;">Common</div>
<div class="a" style="left:308px;top:300px;width:11px;height:11px;box-sizing:border-box;background:#f0f0f0;border-right:1px solid #696969;border-bottom:1px solid #696969;"></div>
<svg class="a" style="left:310.5px;top:303.8px" width="5" height="3"><path d="M0 0H5L2.5 3Z" fill="#000"/></svg>
<div class="a t" style="left:324.80px;top:301.95px;font-size:7.5px;line-height:7.5px;color:#000;transform:scaleX(0.941);transform-origin:0 0;">Offset</div>
<div class="a" style="left:347px;top:299px;width:38px;height:12px;box-sizing:border-box;background:#fff;border-top:1px solid #a0a0a0;border-left:1px solid #a0a0a0;border-right:1px solid #fff;border-bottom:1px solid #fff;"></div>
<div class="a" style="left:348px;top:300px;width:36px;height:10px;box-sizing:border-box;border-top:1px solid #787878;border-left:1px solid #787878;border-right:1px solid #f0f0f0;border-bottom:1px solid #f0f0f0;"></div>
<div class="a t" style="left:349.20px;top:301.95px;font-size:7.5px;line-height:7.5px;color:#000;transform:scaleX(0.899);transform-origin:0 0;">Global</div>
<div class="a" style="left:373px;top:300px;width:11px;height:11px;box-sizing:border-box;background:#f0f0f0;border-right:1px solid #696969;border-bottom:1px solid #696969;"></div>
<svg class="a" style="left:375.5px;top:303.8px" width="5" height="3"><path d="M0 0H5L2.5 3Z" fill="#000"/></svg>
<svg class="a" style="left:387px;top:304px" width="9" height="9"><path d="M8 1L1 8M8 4L4 8M8 7L7 8" stroke="#a0a0a0" stroke-width="1"/></svg>
<div class="a" style="left:870px;top:537px;width:1px;height:11px;background:#a0a0a0;"></div>
<div class="a t" style="left:871.50px;top:539.22px;font-size:8.6px;line-height:8.6px;color:#000;transform:scaleX(0.896);transform-origin:0 0;">1 signals, 1 files, free cache 6454.69 Mb</div>
<svg class="a" style="left:1012px;top:537px" width="12" height="11"><rect x="1" y="3" width="10" height="8" fill="#c89050"/><path d="M1 6H11M6 3V11" stroke="#805020"/><path d="M3 10L9 1" stroke="#e02020" stroke-width="1.5"/><path d="M7 1L10 3" stroke="#20a020" stroke-width="1.5"/></svg>
<div class="a" style="left:425px;top:47px;width:579px;height:456px;background:#f0f0f0;box-sizing:border-box;border:1px solid #727272;box-shadow:0 1px 7px 1px rgba(0,0,0,0.25)"></div>
<div class="a" style="left:426px;top:48px;width:577px;height:20px;background:#ffffff;"></div>
<div class="a" style="left:431px;top:52px;width:12px;height:12px;box-sizing:border-box;background:#fff;border:1px solid #3cb043;"></div>
<div class="a" style="left:433px;top:54px;width:8px;height:8px;box-sizing:border-box;background:linear-gradient(180deg,#7fd07f,#1a9a1a);"></div>
<div class="a t" style="left:445.00px;top:54.34px;font-size:8.1px;line-height:8.1px;color:#000;transform:scaleX(0.959);transform-origin:0 0;">Remove instrumental response</div>
<div class="a t" style="left:954.30px;top:52.47px;font-size:9.6px;line-height:9.6px;color:#000;transform:scaleX(0.936);transform-origin:0 0;">?</div>
<svg class="a" style="left:983px;top:53px" width="9" height="9"><path d="M1 1L8 8M8 1L1 8" stroke="#111" stroke-width="0.9"/></svg>
<div class="a t" style="left:433.00px;top:79.15px;font-size:7.5px;line-height:7.5px;color:#000;transform:scaleX(0.926);transform-origin:0 0;">Sensor file</div>
<div class="a" style="left:477px;top:77px;width:410px;height:11px;box-sizing:border-box;background:#fff;border-top:1px solid #a0a0a0;border-left:1px solid #a0a0a0;border-right:1px solid #fff;border-bottom:1px solid #fff;"></div>
<div class="a" style="left:478px;top:78px;width:408px;height:9px;box-sizing:border-box;border-top:1px solid #787878;border-left:1px solid #787878;border-right:1px solid #f0f0f0;border-bottom:1px solid #f0f0f0;"></div>
<div class="a t" style="left:480.50px;top:79.85px;font-size:7.5px;line-height:7.5px;color:#000;transform:scaleX(0.908);transform-origin:0 0;">C:/Users/Leandro Aguo/Desktop/RS3D.sensor</div>
<div class="a" style="left:875px;top:78px;width:11px;height:10px;box-sizing:border-box;background:#f0f0f0;border-right:1px solid #696969;border-bottom:1px solid #696969;"></div>
<svg class="a" style="left:877.5px;top:81.3px" width="5" height="3"><path d="M0 0H5L2.5 3Z" fill="#000"/></svg>
<div class="a" style="left:892px;top:75px;width:49px;height:15px;box-sizing:border-box;background:#f0f0f0;border-top:1px solid #fff;border-left:1px solid #fff;border-right:1px solid #696969;border-bottom:1px solid #696969;"></div>
<div class="a" style="left:893px;top:76px;width:47px;height:13px;box-sizing:border-box;border-right:1px solid #d8d8d8;border-bottom:1px solid #d8d8d8;"></div>
<div class="a t" style="left:908.80px;top:79.15px;font-size:7.5px;line-height:7.5px;color:#000;transform:scaleX(0.907);transform-origin:0 0;">Save</div>
<div class="a" style="left:946px;top:75px;width:50px;height:15px;box-sizing:border-box;background:#f0f0f0;border-top:1px solid #fff;border-left:1px solid #fff;border-right:1px solid #696969;border-bottom:1px solid #696969;"></div>
<div class="a" style="left:947px;top:76px;width:48px;height:13px;box-sizing:border-box;border-right:1px solid #d8d8d8;border-bottom:1px solid #d8d8d8;"></div>
<div class="a t" style="left:963.50px;top:79.15px;font-size:7.5px;line-height:7.5px;color:#000;transform:scaleX(0.917);transform-origin:0 0;">Load</div>
<div class="a t" style="left:433.00px;top:97.15px;font-size:7.5px;line-height:7.5px;color:#000;transform:scaleX(0.906);transform-origin:0 0;">Sensor name</div>
<div class="a" style="left:477px;top:94px;width:519px;height:13px;box-sizing:border-box;background:#fff;border-top:1px solid #a0a0a0;border-left:1px solid #a0a0a0;border-right:1px solid #fff;border-bottom:1px solid #fff;"></div>
<div class="a" style="left:478px;top:95px;width:517px;height:11px;box-sizing:border-box;border-top:1px solid #787878;border-left:1px solid #787878;border-right:1px solid #f0f0f0;border-bottom:1px solid #f0f0f0;"></div>
<div class="a" style="left:479px;top:97px;width:1px;height:8px;background:#666;"></div>
<div class="a t" style="left:433.00px;top:112.15px;font-size:7.5px;line-height:7.5px;color:#000;transform:scaleX(0.927);transform-origin:0 0;">List of poles</div>
<div class="a t" style="left:717.00px;top:112.15px;font-size:7.5px;line-height:7.5px;color:#000;transform:scaleX(0.927);transform-origin:0 0;">List of zeros</div>
<div class="a" style="left:433px;top:123px;width:225px;height:146px;box-sizing:border-box;background:#fff;border-top:1px solid #828282;border-left:1px solid #828282;"></div>
<div class="a" style="left:434px;top:124px;width:224px;height:16px;background:#f0f0f0;"></div>
<div class="a" style="left:434px;top:140px;width:10px;height:118px;background:#f0f0f0;"></div>
<div class="a" style="left:444px;top:139px;width:214px;height:1px;background:#a0a0a0;"></div>
<div class="a" style="left:510px;top:124px;width:1px;height:16px;background:#a0a0a0;"></div>
<div class="a t" style="left:470.00px;top:128.95px;font-size:7.5px;line-height:7.5px;color:#000;transform:scaleX(1.018);transform-origin:0 0;">Real</div>
<div class="a t" style="left:619.80px;top:128.95px;font-size:7.5px;line-height:7.5px;color:#000;transform:scaleX(1.081);transform-origin:0 0;">Imaginary</div>
<div class="a" style="left:444px;top:159px;width:214px;height:1px;background:#a0a0a0;"></div>
<div class="a" style="left:510px;top:140px;width:1px;height:20px;background:#a0a0a0;"></div>
<div class="a" style="left:443px;top:140px;width:1px;height:20px;background:#a0a0a0;"></div>
<div class="a" style="left:434px;top:159px;width:10px;height:1px;background:#a0a0a0;"></div>
<div class="a t" style="left:436.50px;top:146.91px;font-size:7.2px;line-height:7.2px;color:#000;">1</div>
<div class="a t" style="left:446.00px;top:146.91px;font-size:7.2px;line-height:7.2px;color:#000;">-1</div>
<div class="a t" style="left:513.00px;top:146.91px;font-size:7.2px;line-height:7.2px;color:#000;">0</div>
<div class="a" style="left:444px;top:179px;width:214px;height:1px;background:#a0a0a0;"></div>
<div class="a" style="left:510px;top:159px;width:1px;height:20px;background:#a0a0a0;"></div>
<div class="a" style="left:443px;top:159px;width:1px;height:20px;background:#a0a0a0;"></div>
<div class="a" style="left:434px;top:179px;width:10px;height:1px;background:#a0a0a0;"></div>
<div class="a t" style="left:436.50px;top:166.66px;font-size:7.2px;line-height:7.2px;color:#000;">2</div>
<div class="a t" style="left:446.00px;top:166.66px;font-size:7.2px;line-height:7.2px;color:#000;">-3.03</div>
<div class="a t" style="left:513.00px;top:166.66px;font-size:7.2px;line-height:7.2px;color:#000;">0</div>
<div class="a" style="left:444px;top:199px;width:214px;height:1px;background:#a0a0a0;"></div>
<div class="a" style="left:510px;top:179px;width:1px;height:20px;background:#a0a0a0;"></div>
<div class="a" style="left:443px;top:179px;width:1px;height:20px;background:#a0a0a0;"></div>
<div class="a" style="left:434px;top:199px;width:10px;height:1px;background:#a0a0a0;"></div>
<div class="a t" style="left:436.50px;top:186.41px;font-size:7.2px;line-height:7.2px;color:#000;">3</div>
<div class="a t" style="left:446.00px;top:186.41px;font-size:7.2px;line-height:7.2px;color:#000;">-3.03</div>
<div class="a t" style="left:513.00px;top:186.41px;font-size:7.2px;line-height:7.2px;color:#000;">0</div>
<div class="a" style="left:444px;top:218px;width:214px;height:1px;background:#a0a0a0;"></div>
<div class="a" style="left:510px;top:199px;width:1px;height:20px;background:#a0a0a0;"></div>
<div class="a" style="left:443px;top:199px;width:1px;height:20px;background:#a0a0a0;"></div>
<div class="a" style="left:434px;top:218px;width:10px;height:1px;background:#a0a0a0;"></div>
<div class="a t" style="left:436.50px;top:206.16px;font-size:7.2px;line-height:7.2px;color:#000;">4</div>
<div class="a t" style="left:446.00px;top:206.16px;font-size:7.2px;line-height:7.2px;color:#000;">-666.67</div>
<div class="a t" style="left:513.00px;top:206.16px;font-size:7.2px;line-height:7.2px;color:#000;">0</div>
<div class="a" style="left:434px;top:258px;width:224px;height:11px;background:#f0f0f0;"></div>
<div class="a" style="left:434px;top:258px;width:10px;height:11px;box-sizing:border-box;background:#f0f0f0;border-top:1px solid #fff;border-left:1px solid #fff;border-right:1px solid #696969;border-bottom:1px solid #696969;"></div>
<div class="a" style="left:435px;top:259px;width:8px;height:9px;box-sizing:border-box;border-right:1px solid #d8d8d8;border-bottom:1px solid #d8d8d8;"></div>
<svg class="a" style="left:437px;top:261px" width="4" height="6"><path d="M3 0V6L0 3Z" fill="#000"/></svg>
<div class="a" style="left:444px;top:258px;width:102px;height:11px;box-sizing:border-box;background:#f0f0f0;border-top:1px solid #fff;border-left:1px solid #fff;border-right:1px solid #696969;border-bottom:1px solid #696969;"></div>
<div class="a" style="left:445px;top:259px;width:100px;height:9px;box-sizing:border-box;border-right:1px solid #d8d8d8;border-bottom:1px solid #d8d8d8;"></div>
<div class="a" style="left:546px;top:258px;width:101px;height:11px;background:#f8f8f8;"></div>
<div class="a" style="left:647px;top:258px;width:11px;height:11px;box-sizing:border-box;background:#f0f0f0;border-top:1px solid #fff;border-left:1px solid #fff;border-right:1px solid #696969;border-bottom:1px solid #696969;"></div>
<div class="a" style="left:648px;top:259px;width:9px;height:9px;box-sizing:border-box;border-right:1px solid #d8d8d8;border-bottom:1px solid #d8d8d8;"></div>
<svg class="a" style="left:651px;top:261px" width="4" height="6"><path d="M0 0V6L3 3Z" fill="#000"/></svg>
<div class="a" style="left:717px;top:123px;width:225px;height:146px;box-sizing:border-box;background:#fff;border-top:1px solid #828282;border-left:1px solid #828282;"></div>
<div class="a" style="left:718px;top:124px;width:224px;height:16px;background:#f0f0f0;"></div>
<div class="a" style="left:718px;top:140px;width:10px;height:118px;background:#f0f0f0;"></div>
<div class="a" style="left:728px;top:139px;width:214px;height:1px;background:#a0a0a0;"></div>
<div class="a" style="left:794px;top:124px;width:1px;height:16px;background:#a0a0a0;"></div>
<div class="a t" style="left:754.00px;top:128.95px;font-size:7.5px;line-height:7.5px;color:#000;transform:scaleX(1.018);transform-origin:0 0;">Real</div>
<div class="a t" style="left:903.80px;top:128.95px;font-size:7.5px;line-height:7.5px;color:#000;transform:scaleX(1.081);transform-origin:0 0;">Imaginary</div>
<div class="a" style="left:728px;top:159px;width:214px;height:1px;background:#a0a0a0;"></div>
<div class="a" style="left:794px;top:140px;width:1px;height:20px;background:#a0a0a0;"></div>
<div class="a" style="left:727px;top:140px;width:1px;height:20px;background:#a0a0a0;"></div>
<div class="a" style="left:718px;top:159px;width:10px;height:1px;background:#a0a0a0;"></div>
<div class="a t" style="left:720.50px;top:146.91px;font-size:7.2px;line-height:7.2px;color:#000;">1</div>
<div class="a t" style="left:730.00px;top:146.91px;font-size:7.2px;line-height:7.2px;color:#000;">0</div>
<div class="a t" style="left:797.00px;top:146.91px;font-size:7.2px;line-height:7.2px;color:#000;">0</div>
<div class="a" style="left:728px;top:179px;width:214px;height:1px;background:#a0a0a0;"></div>
<div class="a" style="left:794px;top:159px;width:1px;height:20px;background:#a0a0a0;"></div>
<div class="a" style="left:727px;top:159px;width:1px;height:20px;background:#a0a0a0;"></div>
<div class="a" style="left:718px;top:179px;width:10px;height:1px;background:#a0a0a0;"></div>
<div class="a t" style="left:720.50px;top:166.66px;font-size:7.2px;line-height:7.2px;color:#000;">2</div>
<div class="a t" style="left:730.00px;top:166.66px;font-size:7.2px;line-height:7.2px;color:#000;">0</div>
<div class="a t" style="left:797.00px;top:166.66px;font-size:7.2px;line-height:7.2px;color:#000;">0</div>
<div class="a" style="left:728px;top:199px;width:214px;height:1px;background:#a0a0a0;"></div>
<div class="a" style="left:794px;top:179px;width:1px;height:20px;background:#a0a0a0;"></div>
<div class="a" style="left:727px;top:179px;width:1px;height:20px;background:#a0a0a0;"></div>
<div class="a" style="left:718px;top:199px;width:10px;height:1px;background:#a0a0a0;"></div>
<div class="a t" style="left:720.50px;top:186.41px;font-size:7.2px;line-height:7.2px;color:#000;">3</div>
<div class="a t" style="left:730.00px;top:186.41px;font-size:7.2px;line-height:7.2px;color:#000;">0</div>
<div class="a t" style="left:797.00px;top:186.41px;font-size:7.2px;line-height:7.2px;color:#000;">0</div>
<div class="a" style="left:718px;top:258px;width:224px;height:11px;background:#f0f0f0;"></div>
<div class="a" style="left:718px;top:258px;width:10px;height:11px;box-sizing:border-box;background:#f0f0f0;border-top:1px solid #fff;border-left:1px solid #fff;border-right:1px solid #696969;border-bottom:1px solid #696969;"></div>
<div class="a" style="left:719px;top:259px;width:8px;height:9px;box-sizing:border-box;border-right:1px solid #d8d8d8;border-bottom:1px solid #d8d8d8;"></div>
<svg class="a" style="left:721px;top:261px" width="4" height="6"><path d="M3 0V6L0 3Z" fill="#000"/></svg>
<div class="a" style="left:728px;top:258px;width:102px;height:11px;box-sizing:border-box;background:#f0f0f0;border-top:1px solid #fff;border-left:1px solid #fff;border-right:1px solid #696969;border-bottom:1px solid #696969;"></div>
<div class="a" style="left:729px;top:259px;width:100px;height:9px;box-sizing:border-box;border-right:1px solid #d8d8d8;border-bottom:1px solid #d8d8d8;"></div>
<div class="a" style="left:830px;top:258px;width:101px;height:11px;background:#f8f8f8;"></div>
<div class="a" style="left:931px;top:258px;width:11px;height:11px;box-sizing:border-box;background:#f0f0f0;border-top:1px solid #fff;border-left:1px solid #fff;border-right:1px solid #696969;border-bottom:1px solid #696969;"></div>
<div class="a" style="left:932px;top:259px;width:9px;height:9px;box-sizing:border-box;border-right:1px solid #d8d8d8;border-bottom:1px solid #d8d8d8;"></div>
<svg class="a" style="left:935px;top:261px" width="4" height="6"><path d="M0 0V6L3 3Z" fill="#000"/></svg>
<div class="a" style="left:663px;top:124px;width:50px;height:15px;box-sizing:border-box;background:#f0f0f0;border-top:1px solid #fff;border-left:1px solid #fff;border-right:1px solid #696969;border-bottom:1px solid #696969;"></div>
<div class="a" style="left:664px;top:125px;width:48px;height:13px;box-sizing:border-box;border-right:1px solid #d8d8d8;border-bottom:1px solid #d8d8d8;"></div>
<div class="a t" style="left:681.70px;top:127.95px;font-size:7.5px;line-height:7.5px;color:#000;transform:scaleX(0.884);transform-origin:0 0;">Add</div>
<div class="a" style="left:663px;top:143px;width:50px;height:15px;box-sizing:border-box;background:#f0f0f0;border-top:1px solid #fff;border-left:1px solid #fff;border-right:1px solid #696969;border-bottom:1px solid #696969;"></div>
<div class="a" style="left:664px;top:144px;width:48px;height:13px;box-sizing:border-box;border-right:1px solid #d8d8d8;border-bottom:1px solid #d8d8d8;"></div>
<div class="a t" style="left:675.60px;top:146.95px;font-size:7.5px;line-height:7.5px;color:#000;transform:scaleX(0.867);transform-origin:0 0;">Remove</div>
<div class="a" style="left:946px;top:124px;width:50px;height:15px;box-sizing:border-box;background:#f0f0f0;border-top:1px solid #fff;border-left:1px solid #fff;border-right:1px solid #696969;border-bottom:1px solid #696969;"></div>
<div class="a" style="left:947px;top:125px;width:48px;height:13px;box-sizing:border-box;border-right:1px solid #d8d8d8;border-bottom:1px solid #d8d8d8;"></div>
<div class="a t" style="left:964.70px;top:127.95px;font-size:7.5px;line-height:7.5px;color:#000;transform:scaleX(0.884);transform-origin:0 0;">Add</div>
<div class="a" style="left:946px;top:143px;width:50px;height:15px;box-sizing:border-box;background:#f0f0f0;border-top:1px solid #fff;border-left:1px solid #fff;border-right:1px solid #696969;border-bottom:1px solid #696969;"></div>
<div class="a" style="left:947px;top:144px;width:48px;height:13px;box-sizing:border-box;border-right:1px solid #d8d8d8;border-bottom:1px solid #d8d8d8;"></div>
<div class="a t" style="left:958.60px;top:146.95px;font-size:7.5px;line-height:7.5px;color:#000;transform:scaleX(0.867);transform-origin:0 0;">Remove</div>
<div class="a t" style="left:433.30px;top:276.65px;font-size:7.5px;line-height:7.5px;color:#000;transform:scaleX(0.909);transform-origin:0 0;">Normalization factor</div>
<div class="a" style="left:498px;top:274px;width:199px;height:12px;box-sizing:border-box;background:#fff;border-top:1px solid #a0a0a0;border-left:1px solid #a0a0a0;border-right:1px solid #fff;border-bottom:1px solid #fff;"></div>
<div class="a" style="left:499px;top:275px;width:197px;height:10px;box-sizing:border-box;border-top:1px solid #787878;border-left:1px solid #787878;border-right:1px solid #f0f0f0;border-bottom:1px solid #f0f0f0;"></div>
<div class="a t" style="left:501.00px;top:277.07px;font-size:7.0px;line-height:7.0px;color:#000;">1</div>
<div class="a t" style="left:433.30px;top:292.65px;font-size:7.5px;line-height:7.5px;color:#000;transform:scaleX(0.900);transform-origin:0 0;">X values</div>
<div class="a" style="left:498px;top:291px;width:199px;height:11px;box-sizing:border-box;background:#fff;border-top:1px solid #a0a0a0;border-left:1px solid #a0a0a0;border-right:1px solid #fff;border-bottom:1px solid #fff;"></div>
<div class="a" style="left:499px;top:292px;width:197px;height:9px;box-sizing:border-box;border-top:1px solid #787878;border-left:1px solid #787878;border-right:1px solid #f0f0f0;border-bottom:1px solid #f0f0f0;"></div>
<div class="a t" style="left:500.60px;top:292.65px;font-size:7.5px;line-height:7.5px;color:#000;transform:scaleX(0.933);transform-origin:0 0;">Angular frequency (radians/sec)</div>
<div class="a" style="left:685px;top:292px;width:11px;height:10px;box-sizing:border-box;background:#f0f0f0;border-right:1px solid #696969;border-bottom:1px solid #696969;"></div>
<svg class="a" style="left:687.5px;top:295.3px" width="5" height="3"><path d="M0 0H5L2.5 3Z" fill="#000"/></svg>
<div class="a t" style="left:702.50px;top:276.65px;font-size:7.5px;line-height:7.5px;color:#000;transform:scaleX(0.952);transform-origin:0 0;">Transduction factor [V/(m/s)]</div>
<div class="a" style="left:796px;top:274px;width:200px;height:12px;box-sizing:border-box;background:#fff;border-top:1px solid #a0a0a0;border-left:1px solid #a0a0a0;border-right:1px solid #fff;border-bottom:1px solid #fff;"></div>
<div class="a" style="left:797px;top:275px;width:198px;height:10px;box-sizing:border-box;border-top:1px solid #787878;border-left:1px solid #787878;border-right:1px solid #f0f0f0;border-bottom:1px solid #f0f0f0;"></div>
<div class="a t" style="left:798.70px;top:276.65px;font-size:7.5px;line-height:7.5px;color:#000;transform:scaleX(0.922);transform-origin:0 0;">3.6e+08</div>
<div class="a t" style="left:702.30px;top:292.65px;font-size:7.5px;line-height:7.5px;color:#000;transform:scaleX(0.929);transform-origin:0 0;">Noise level (V)</div>
<div class="a" style="left:796px;top:291px;width:200px;height:12px;box-sizing:border-box;background:#fff;border-top:1px solid #a0a0a0;border-left:1px solid #a0a0a0;border-right:1px solid #fff;border-bottom:1px solid #fff;"></div>
<div class="a" style="left:797px;top:292px;width:198px;height:10px;box-sizing:border-box;border-top:1px solid #787878;border-left:1px solid #787878;border-right:1px solid #f0f0f0;border-bottom:1px solid #f0f0f0;"></div>
<div class="a t" style="left:799.00px;top:293.15px;font-size:7.5px;line-height:7.5px;color:#000;transform:scaleX(0.938);transform-origin:0 0;">1e-08</div>
<div class="a" style="left:433px;top:305px;width:563px;height:171px;background:#ffffff;"></div>
<svg class="a" style="left:0;top:0" width="1024" height="548"><line x1="494.41" y1="305.00" x2="494.41" y2="452.00" stroke="#eeeeee" stroke-width="1"/><line x1="512.23" y1="305.00" x2="512.23" y2="452.00" stroke="#dadada" stroke-width="1"/><line x1="526.05" y1="305.00" x2="526.05" y2="452.00" stroke="#eeeeee" stroke-width="1"/><line x1="537.34" y1="305.00" x2="537.34" y2="452.00" stroke="#e8e8e8" stroke-width="1"/><line x1="546.88" y1="305.00" x2="546.88" y2="452.00" stroke="#eeeeee" stroke-width="1"/><line x1="555.15" y1="305.00" x2="555.15" y2="452.00" stroke="#e8e8e8" stroke-width="1"/><line x1="562.45" y1="305.00" x2="562.45" y2="452.00" stroke="#eeeeee" stroke-width="1"/><line x1="568.97" y1="305.00" x2="568.97" y2="452.00" stroke="#e8e8e8" stroke-width="1"/><line x1="574.88" y1="305.00" x2="574.88" y2="452.00" stroke="#eeeeee" stroke-width="1"/><line x1="580.26" y1="305.00" x2="580.26" y2="452.00" stroke="#e8e8e8" stroke-width="1"/><line x1="585.22" y1="305.00" x2="585.22" y2="452.00" stroke="#eeeeee" stroke-width="1"/><line x1="589.81" y1="305.00" x2="589.81" y2="452.00" stroke="#e8e8e8" stroke-width="1"/><line x1="594.08" y1="305.00" x2="594.08" y2="452.00" stroke="#eeeeee" stroke-width="1"/><line x1="598.08" y1="305.00" x2="598.08" y2="452.00" stroke="#e8e8e8" stroke-width="1"/><line x1="601.84" y1="305.00" x2="601.84" y2="452.00" stroke="#eeeeee" stroke-width="1"/><line x1="605.37" y1="305.00" x2="605.37" y2="452.00" stroke="#e8e8e8" stroke-width="1"/><line x1="608.72" y1="305.00" x2="608.72" y2="452.00" stroke="#eeeeee" stroke-width="1"/><line x1="611.90" y1="305.00" x2="611.90" y2="452.00" stroke="#dadada" stroke-width="1"/><line x1="637.01" y1="305.00" x2="637.01" y2="452.00" stroke="#eeeeee" stroke-width="1"/><line x1="654.83" y1="305.00" x2="654.83" y2="452.00" stroke="#dadada" stroke-width="1"/><line x1="668.65" y1="305.00" x2="668.65" y2="452.00" stroke="#eeeeee" stroke-width="1"/><line x1="679.94" y1="305.00" x2="679.94" y2="452.00" stroke="#e8e8e8" stroke-width="1"/><line x1="689.48" y1="305.00" x2="689.48" y2="452.00" stroke="#eeeeee" stroke-width="1"/><line x1="697.75" y1="305.00" x2="697.75" y2="452.00" stroke="#e8e8e8" stroke-width="1"/><line x1="705.05" y1="305.00" x2="705.05" y2="452.00" stroke="#eeeeee" stroke-width="1"/><line x1="711.57" y1="305.00" x2="711.57" y2="452.00" stroke="#e8e8e8" stroke-width="1"/><line x1="717.48" y1="305.00" x2="717.48" y2="452.00" stroke="#eeeeee" stroke-width="1"/><line x1="722.86" y1="305.00" x2="722.86" y2="452.00" stroke="#e8e8e8" stroke-width="1"/><line x1="727.82" y1="305.00" x2="727.82" y2="452.00" stroke="#eeeeee" stroke-width="1"/><line x1="732.41" y1="305.00" x2="732.41" y2="452.00" stroke="#e8e8e8" stroke-width="1"/><line x1="736.68" y1="305.00" x2="736.68" y2="452.00" stroke="#eeeeee" stroke-width="1"/><line x1="740.68" y1="305.00" x2="740.68" y2="452.00" stroke="#e8e8e8" stroke-width="1"/><line x1="744.44" y1="305.00" x2="744.44" y2="452.00" stroke="#eeeeee" stroke-width="1"/><line x1="747.97" y1="305.00" x2="747.97" y2="452.00" stroke="#e8e8e8" stroke-width="1"/><line x1="751.32" y1="305.00" x2="751.32" y2="452.00" stroke="#eeeeee" stroke-width="1"/><line x1="754.50" y1="305.00" x2="754.50" y2="452.00" stroke="#dadada" stroke-width="1"/><line x1="779.61" y1="305.00" x2="779.61" y2="452.00" stroke="#eeeeee" stroke-width="1"/><line x1="797.43" y1="305.00" x2="797.43" y2="452.00" stroke="#dadada" stroke-width="1"/><line x1="811.25" y1="305.00" x2="811.25" y2="452.00" stroke="#eeeeee" stroke-width="1"/><line x1="822.54" y1="305.00" x2="822.54" y2="452.00" stroke="#e8e8e8" stroke-width="1"/><line x1="832.08" y1="305.00" x2="832.08" y2="452.00" stroke="#eeeeee" stroke-width="1"/><line x1="840.35" y1="305.00" x2="840.35" y2="452.00" stroke="#e8e8e8" stroke-width="1"/><line x1="847.65" y1="305.00" x2="847.65" y2="452.00" stroke="#eeeeee" stroke-width="1"/><line x1="854.17" y1="305.00" x2="854.17" y2="452.00" stroke="#e8e8e8" stroke-width="1"/><line x1="860.08" y1="305.00" x2="860.08" y2="452.00" stroke="#eeeeee" stroke-width="1"/><line x1="865.46" y1="305.00" x2="865.46" y2="452.00" stroke="#e8e8e8" stroke-width="1"/><line x1="870.42" y1="305.00" x2="870.42" y2="452.00" stroke="#eeeeee" stroke-width="1"/><line x1="875.01" y1="305.00" x2="875.01" y2="452.00" stroke="#e8e8e8" stroke-width="1"/><line x1="879.28" y1="305.00" x2="879.28" y2="452.00" stroke="#eeeeee" stroke-width="1"/><line x1="883.28" y1="305.00" x2="883.28" y2="452.00" stroke="#e8e8e8" stroke-width="1"/><line x1="887.04" y1="305.00" x2="887.04" y2="452.00" stroke="#eeeeee" stroke-width="1"/><line x1="890.57" y1="305.00" x2="890.57" y2="452.00" stroke="#e8e8e8" stroke-width="1"/><line x1="893.92" y1="305.00" x2="893.92" y2="452.00" stroke="#eeeeee" stroke-width="1"/><line x1="897.10" y1="305.00" x2="897.10" y2="452.00" stroke="#dadada" stroke-width="1"/><line x1="922.21" y1="305.00" x2="922.21" y2="452.00" stroke="#eeeeee" stroke-width="1"/><line x1="940.03" y1="305.00" x2="940.03" y2="452.00" stroke="#dadada" stroke-width="1"/><line x1="953.85" y1="305.00" x2="953.85" y2="452.00" stroke="#eeeeee" stroke-width="1"/><line x1="965.14" y1="305.00" x2="965.14" y2="452.00" stroke="#e8e8e8" stroke-width="1"/><line x1="974.68" y1="305.00" x2="974.68" y2="452.00" stroke="#eeeeee" stroke-width="1"/><line x1="982.95" y1="305.00" x2="982.95" y2="452.00" stroke="#e8e8e8" stroke-width="1"/><line x1="990.25" y1="305.00" x2="990.25" y2="452.00" stroke="#eeeeee" stroke-width="1"/><line x1="469.30" y1="451.93" x2="996.00" y2="451.93" stroke="#ebebeb" stroke-width="1"/><line x1="469.30" y1="447.91" x2="996.00" y2="447.91" stroke="#dcdcdc" stroke-width="1"/><line x1="469.30" y1="444.79" x2="996.00" y2="444.79" stroke="#ebebeb" stroke-width="1"/><line x1="469.30" y1="442.24" x2="996.00" y2="442.24" stroke="#ebebeb" stroke-width="1"/><line x1="469.30" y1="438.21" x2="996.00" y2="438.21" stroke="#dcdcdc" stroke-width="1"/><line x1="469.30" y1="435.09" x2="996.00" y2="435.09" stroke="#ebebeb" stroke-width="1"/><line x1="469.30" y1="432.54" x2="996.00" y2="432.54" stroke="#dcdcdc" stroke-width="1"/><line x1="469.30" y1="430.39" x2="996.00" y2="430.39" stroke="#ebebeb" stroke-width="1"/><line x1="469.30" y1="428.52" x2="996.00" y2="428.52" stroke="#dcdcdc" stroke-width="1"/><line x1="469.30" y1="426.87" x2="996.00" y2="426.87" stroke="#ebebeb" stroke-width="1"/><line x1="469.30" y1="425.40" x2="996.00" y2="425.40" stroke="#dcdcdc" stroke-width="1"/><line x1="469.30" y1="425.40" x2="996.00" y2="425.40" stroke="#dcdcdc" stroke-width="1"/><line x1="469.30" y1="419.73" x2="996.00" y2="419.73" stroke="#ebebeb" stroke-width="1"/><line x1="469.30" y1="415.71" x2="996.00" y2="415.71" stroke="#dcdcdc" stroke-width="1"/><line x1="469.30" y1="412.59" x2="996.00" y2="412.59" stroke="#ebebeb" stroke-width="1"/><line x1="469.30" y1="410.04" x2="996.00" y2="410.04" stroke="#ebebeb" stroke-width="1"/><line x1="469.30" y1="406.01" x2="996.00" y2="406.01" stroke="#dcdcdc" stroke-width="1"/><line x1="469.30" y1="402.89" x2="996.00" y2="402.89" stroke="#ebebeb" stroke-width="1"/><line x1="469.30" y1="400.34" x2="996.00" y2="400.34" stroke="#dcdcdc" stroke-width="1"/><line x1="469.30" y1="398.19" x2="996.00" y2="398.19" stroke="#ebebeb" stroke-width="1"/><line x1="469.30" y1="396.32" x2="996.00" y2="396.32" stroke="#dcdcdc" stroke-width="1"/><line x1="469.30" y1="394.67" x2="996.00" y2="394.67" stroke="#ebebeb" stroke-width="1"/><line x1="469.30" y1="393.20" x2="996.00" y2="393.20" stroke="#dcdcdc" stroke-width="1"/><line x1="469.30" y1="393.20" x2="996.00" y2="393.20" stroke="#dcdcdc" stroke-width="1"/><line x1="469.30" y1="387.53" x2="996.00" y2="387.53" stroke="#ebebeb" stroke-width="1"/><line x1="469.30" y1="383.51" x2="996.00" y2="383.51" stroke="#dcdcdc" stroke-width="1"/><line x1="469.30" y1="380.39" x2="996.00" y2="380.39" stroke="#ebebeb" stroke-width="1"/><line x1="469.30" y1="377.84" x2="996.00" y2="377.84" stroke="#ebebeb" stroke-width="1"/><line x1="469.30" y1="373.81" x2="996.00" y2="373.81" stroke="#dcdcdc" stroke-width="1"/><line x1="469.30" y1="370.69" x2="996.00" y2="370.69" stroke="#ebebeb" stroke-width="1"/><line x1="469.30" y1="368.14" x2="996.00" y2="368.14" stroke="#dcdcdc" stroke-width="1"/><line x1="469.30" y1="365.99" x2="996.00" y2="365.99" stroke="#ebebeb" stroke-width="1"/><line x1="469.30" y1="364.12" x2="996.00" y2="364.12" stroke="#dcdcdc" stroke-width="1"/><line x1="469.30" y1="362.47" x2="996.00" y2="362.47" stroke="#ebebeb" stroke-width="1"/><line x1="469.30" y1="361.00" x2="996.00" y2="361.00" stroke="#dcdcdc" stroke-width="1"/><line x1="469.30" y1="361.00" x2="996.00" y2="361.00" stroke="#dcdcdc" stroke-width="1"/><line x1="469.30" y1="355.33" x2="996.00" y2="355.33" stroke="#ebebeb" stroke-width="1"/><line x1="469.30" y1="351.31" x2="996.00" y2="351.31" stroke="#dcdcdc" stroke-width="1"/><line x1="469.30" y1="348.19" x2="996.00" y2="348.19" stroke="#ebebeb" stroke-width="1"/><line x1="469.30" y1="345.64" x2="996.00" y2="345.64" stroke="#ebebeb" stroke-width="1"/><line x1="469.30" y1="341.61" x2="996.00" y2="341.61" stroke="#dcdcdc" stroke-width="1"/><line x1="469.30" y1="338.49" x2="996.00" y2="338.49" stroke="#ebebeb" stroke-width="1"/><line x1="469.30" y1="335.94" x2="996.00" y2="335.94" stroke="#dcdcdc" stroke-width="1"/><line x1="469.30" y1="333.79" x2="996.00" y2="333.79" stroke="#ebebeb" stroke-width="1"/><line x1="469.30" y1="331.92" x2="996.00" y2="331.92" stroke="#dcdcdc" stroke-width="1"/><line x1="469.30" y1="330.27" x2="996.00" y2="330.27" stroke="#ebebeb" stroke-width="1"/><line x1="469.30" y1="328.80" x2="996.00" y2="328.80" stroke="#dcdcdc" stroke-width="1"/><line x1="469.30" y1="328.80" x2="996.00" y2="328.80" stroke="#dcdcdc" stroke-width="1"/><line x1="469.30" y1="323.13" x2="996.00" y2="323.13" stroke="#ebebeb" stroke-width="1"/><line x1="469.30" y1="319.11" x2="996.00" y2="319.11" stroke="#dcdcdc" stroke-width="1"/><line x1="469.30" y1="315.99" x2="996.00" y2="315.99" stroke="#ebebeb" stroke-width="1"/><line x1="469.30" y1="313.44" x2="996.00" y2="313.44" stroke="#ebebeb" stroke-width="1"/><line x1="469.30" y1="309.41" x2="996.00" y2="309.41" stroke="#dcdcdc" stroke-width="1"/><line x1="469.30" y1="306.29" x2="996.00" y2="306.29" stroke="#ebebeb" stroke-width="1"/><line x1="494.41" y1="452.00" x2="494.41" y2="455.00" stroke="#000" stroke-width="1"/><line x1="512.23" y1="452.00" x2="512.23" y2="457.00" stroke="#000" stroke-width="1"/><line x1="526.05" y1="452.00" x2="526.05" y2="455.00" stroke="#000" stroke-width="1"/><line x1="537.34" y1="452.00" x2="537.34" y2="455.00" stroke="#000" stroke-width="1"/><line x1="546.88" y1="452.00" x2="546.88" y2="455.00" stroke="#000" stroke-width="1"/><line x1="555.15" y1="452.00" x2="555.15" y2="457.00" stroke="#000" stroke-width="1"/><line x1="562.45" y1="452.00" x2="562.45" y2="455.00" stroke="#000" stroke-width="1"/><line x1="568.97" y1="452.00" x2="568.97" y2="455.00" stroke="#000" stroke-width="1"/><line x1="574.88" y1="452.00" x2="574.88" y2="455.00" stroke="#000" stroke-width="1"/><line x1="580.26" y1="452.00" x2="580.26" y2="457.00" stroke="#000" stroke-width="1"/><line x1="585.22" y1="452.00" x2="585.22" y2="455.00" stroke="#000" stroke-width="1"/><line x1="589.81" y1="452.00" x2="589.81" y2="455.00" stroke="#000" stroke-width="1"/><line x1="594.08" y1="452.00" x2="594.08" y2="455.00" stroke="#000" stroke-width="1"/><line x1="598.08" y1="452.00" x2="598.08" y2="457.00" stroke="#000" stroke-width="1"/><line x1="601.84" y1="452.00" x2="601.84" y2="455.00" stroke="#000" stroke-width="1"/><line x1="605.37" y1="452.00" x2="605.37" y2="455.00" stroke="#000" stroke-width="1"/><line x1="608.72" y1="452.00" x2="608.72" y2="455.00" stroke="#000" stroke-width="1"/><line x1="611.90" y1="452.00" x2="611.90" y2="455.00" stroke="#000" stroke-width="1"/><line x1="637.01" y1="452.00" x2="637.01" y2="455.00" stroke="#000" stroke-width="1"/><line x1="654.83" y1="452.00" x2="654.83" y2="457.00" stroke="#000" stroke-width="1"/><line x1="668.65" y1="452.00" x2="668.65" y2="455.00" stroke="#000" stroke-width="1"/><line x1="679.94" y1="452.00" x2="679.94" y2="455.00" stroke="#000" stroke-width="1"/><line x1="689.48" y1="452.00" x2="689.48" y2="455.00" stroke="#000" stroke-width="1"/><line x1="697.75" y1="452.00" x2="697.75" y2="457.00" stroke="#000" stroke-width="1"/><line x1="705.05" y1="452.00" x2="705.05" y2="455.00" stroke="#000" stroke-width="1"/><line x1="711.57" y1="452.00" x2="711.57" y2="455.00" stroke="#000" stroke-width="1"/><line x1="717.48" y1="452.00" x2="717.48" y2="455.00" stroke="#000" stroke-width="1"/><line x1="722.86" y1="452.00" x2="722.86" y2="457.00" stroke="#000" stroke-width="1"/><line x1="727.82" y1="452.00" x2="727.82" y2="455.00" stroke="#000" stroke-width="1"/><line x1="732.41" y1="452.00" x2="732.41" y2="455.00" stroke="#000" stroke-width="1"/><line x1="736.68" y1="452.00" x2="736.68" y2="455.00" stroke="#000" stroke-width="1"/><line x1="740.68" y1="452.00" x2="740.68" y2="457.00" stroke="#000" stroke-width="1"/><line x1="744.44" y1="452.00" x2="744.44" y2="455.00" stroke="#000" stroke-width="1"/><line x1="747.97" y1="452.00" x2="747.97" y2="455.00" stroke="#000" stroke-width="1"/><line x1="751.32" y1="452.00" x2="751.32" y2="455.00" stroke="#000" stroke-width="1"/><line x1="754.50" y1="452.00" x2="754.50" y2="455.00" stroke="#000" stroke-width="1"/><line x1="779.61" y1="452.00" x2="779.61" y2="455.00" stroke="#000" stroke-width="1"/><line x1="797.43" y1="452.00" x2="797.43" y2="457.00" stroke="#000" stroke-width="1"/><line x1="811.25" y1="452.00" x2="811.25" y2="455.00" stroke="#000" stroke-width="1"/><line x1="822.54" y1="452.00" x2="822.54" y2="455.00" stroke="#000" stroke-width="1"/><line x1="832.08" y1="452.00" x2="832.08" y2="455.00" stroke="#000" stroke-width="1"/><line x1="840.35" y1="452.00" x2="840.35" y2="457.00" stroke="#000" stroke-width="1"/><line x1="847.65" y1="452.00" x2="847.65" y2="455.00" stroke="#000" stroke-width="1"/><line x1="854.17" y1="452.00" x2="854.17" y2="455.00" stroke="#000" stroke-width="1"/><line x1="860.08" y1="452.00" x2="860.08" y2="455.00" stroke="#000" stroke-width="1"/><line x1="865.46" y1="452.00" x2="865.46" y2="457.00" stroke="#000" stroke-width="1"/><line x1="870.42" y1="452.00" x2="870.42" y2="455.00" stroke="#000" stroke-width="1"/><line x1="875.01" y1="452.00" x2="875.01" y2="455.00" stroke="#000" stroke-width="1"/><line x1="879.28" y1="452.00" x2="879.28" y2="455.00" stroke="#000" stroke-width="1"/><line x1="883.28" y1="452.00" x2="883.28" y2="457.00" stroke="#000" stroke-width="1"/><line x1="887.04" y1="452.00" x2="887.04" y2="455.00" stroke="#000" stroke-width="1"/><line x1="890.57" y1="452.00" x2="890.57" y2="455.00" stroke="#000" stroke-width="1"/><line x1="893.92" y1="452.00" x2="893.92" y2="455.00" stroke="#000" stroke-width="1"/><line x1="897.10" y1="452.00" x2="897.10" y2="455.00" stroke="#000" stroke-width="1"/><line x1="922.21" y1="452.00" x2="922.21" y2="455.00" stroke="#000" stroke-width="1"/><line x1="940.03" y1="452.00" x2="940.03" y2="457.00" stroke="#000" stroke-width="1"/><line x1="953.85" y1="452.00" x2="953.85" y2="455.00" stroke="#000" stroke-width="1"/><line x1="965.14" y1="452.00" x2="965.14" y2="455.00" stroke="#000" stroke-width="1"/><line x1="974.68" y1="452.00" x2="974.68" y2="455.00" stroke="#000" stroke-width="1"/><line x1="982.95" y1="452.00" x2="982.95" y2="457.00" stroke="#000" stroke-width="1"/><line x1="990.25" y1="452.00" x2="990.25" y2="455.00" stroke="#000" stroke-width="1"/><line x1="466.80" y1="451.93" x2="469.30" y2="451.93" stroke="#000" stroke-width="1"/><line x1="464.30" y1="447.91" x2="469.30" y2="447.91" stroke="#000" stroke-width="1"/><line x1="466.80" y1="444.79" x2="469.30" y2="444.79" stroke="#000" stroke-width="1"/><line x1="466.80" y1="442.24" x2="469.30" y2="442.24" stroke="#000" stroke-width="1"/><line x1="464.30" y1="438.21" x2="469.30" y2="438.21" stroke="#000" stroke-width="1"/><line x1="466.80" y1="435.09" x2="469.30" y2="435.09" stroke="#000" stroke-width="1"/><line x1="464.30" y1="432.54" x2="469.30" y2="432.54" stroke="#000" stroke-width="1"/><line x1="466.80" y1="430.39" x2="469.30" y2="430.39" stroke="#000" stroke-width="1"/><line x1="464.30" y1="428.52" x2="469.30" y2="428.52" stroke="#000" stroke-width="1"/><line x1="466.80" y1="426.87" x2="469.30" y2="426.87" stroke="#000" stroke-width="1"/><line x1="464.30" y1="425.40" x2="469.30" y2="425.40" stroke="#000" stroke-width="1"/><line x1="466.80" y1="425.40" x2="469.30" y2="425.40" stroke="#000" stroke-width="1"/><line x1="466.80" y1="419.73" x2="469.30" y2="419.73" stroke="#000" stroke-width="1"/><line x1="464.30" y1="415.71" x2="469.30" y2="415.71" stroke="#000" stroke-width="1"/><line x1="466.80" y1="412.59" x2="469.30" y2="412.59" stroke="#000" stroke-width="1"/><line x1="466.80" y1="410.04" x2="469.30" y2="410.04" stroke="#000" stroke-width="1"/><line x1="464.30" y1="406.01" x2="469.30" y2="406.01" stroke="#000" stroke-width="1"/><line x1="466.80" y1="402.89" x2="469.30" y2="402.89" stroke="#000" stroke-width="1"/><line x1="464.30" y1="400.34" x2="469.30" y2="400.34" stroke="#000" stroke-width="1"/><line x1="466.80" y1="398.19" x2="469.30" y2="398.19" stroke="#000" stroke-width="1"/><line x1="464.30" y1="396.32" x2="469.30" y2="396.32" stroke="#000" stroke-width="1"/><line x1="466.80" y1="394.67" x2="469.30" y2="394.67" stroke="#000" stroke-width="1"/><line x1="464.30" y1="393.20" x2="469.30" y2="393.20" stroke="#000" stroke-width="1"/><line x1="466.80" y1="393.20" x2="469.30" y2="393.20" stroke="#000" stroke-width="1"/><line x1="466.80" y1="387.53" x2="469.30" y2="387.53" stroke="#000" stroke-width="1"/><line x1="464.30" y1="383.51" x2="469.30" y2="383.51" stroke="#000" stroke-width="1"/><line x1="466.80" y1="380.39" x2="469.30" y2="380.39" stroke="#000" stroke-width="1"/><line x1="466.80" y1="377.84" x2="469.30" y2="377.84" stroke="#000" stroke-width="1"/><line x1="464.30" y1="373.81" x2="469.30" y2="373.81" stroke="#000" stroke-width="1"/><line x1="466.80" y1="370.69" x2="469.30" y2="370.69" stroke="#000" stroke-width="1"/><line x1="464.30" y1="368.14" x2="469.30" y2="368.14" stroke="#000" stroke-width="1"/><line x1="466.80" y1="365.99" x2="469.30" y2="365.99" stroke="#000" stroke-width="1"/><line x1="464.30" y1="364.12" x2="469.30" y2="364.12" stroke="#000" stroke-width="1"/><line x1="466.80" y1="362.47" x2="469.30" y2="362.47" stroke="#000" stroke-width="1"/><line x1="464.30" y1="361.00" x2="469.30" y2="361.00" stroke="#000" stroke-width="1"/><line x1="466.80" y1="361.00" x2="469.30" y2="361.00" stroke="#000" stroke-width="1"/><line x1="466.80" y1="355.33" x2="469.30" y2="355.33" stroke="#000" stroke-width="1"/><line x1="464.30" y1="351.31" x2="469.30" y2="351.31" stroke="#000" stroke-width="1"/><line x1="466.80" y1="348.19" x2="469.30" y2="348.19" stroke="#000" stroke-width="1"/><line x1="466.80" y1="345.64" x2="469.30" y2="345.64" stroke="#000" stroke-width="1"/><line x1="464.30" y1="341.61" x2="469.30" y2="341.61" stroke="#000" stroke-width="1"/><line x1="466.80" y1="338.49" x2="469.30" y2="338.49" stroke="#000" stroke-width="1"/><line x1="464.30" y1="335.94" x2="469.30" y2="335.94" stroke="#000" stroke-width="1"/><line x1="466.80" y1="333.79" x2="469.30" y2="333.79" stroke="#000" stroke-width="1"/><line x1="464.30" y1="331.92" x2="469.30" y2="331.92" stroke="#000" stroke-width="1"/><line x1="466.80" y1="330.27" x2="469.30" y2="330.27" stroke="#000" stroke-width="1"/><line x1="464.30" y1="328.80" x2="469.30" y2="328.80" stroke="#000" stroke-width="1"/><line x1="466.80" y1="328.80" x2="469.30" y2="328.80" stroke="#000" stroke-width="1"/><line x1="466.80" y1="323.13" x2="469.30" y2="323.13" stroke="#000" stroke-width="1"/><line x1="464.30" y1="319.11" x2="469.30" y2="319.11" stroke="#000" stroke-width="1"/><line x1="466.80" y1="315.99" x2="469.30" y2="315.99" stroke="#000" stroke-width="1"/><line x1="466.80" y1="313.44" x2="469.30" y2="313.44" stroke="#000" stroke-width="1"/><line x1="464.30" y1="309.41" x2="469.30" y2="309.41" stroke="#000" stroke-width="1"/><line x1="466.80" y1="306.29" x2="469.30" y2="306.29" stroke="#000" stroke-width="1"/><polyline points="469.30,452.35 470.62,451.46 471.94,450.57 473.26,449.68 474.57,448.78 475.89,447.89 477.21,447.00 478.53,446.11 479.85,445.22 481.17,444.33 482.49,443.44 483.81,442.54 485.12,441.65 486.44,440.76 487.76,439.87 489.08,438.98 490.40,438.09 491.72,437.20 493.04,436.31 494.35,435.42 495.67,434.53 496.99,433.64 498.31,432.75 499.63,431.86 500.95,430.97 502.27,430.08 503.59,429.19 504.90,428.30 506.22,427.42 507.54,426.53 508.86,425.64 510.18,424.75 511.50,423.86 512.82,422.97 514.14,422.09 515.45,421.20 516.77,420.31 518.09,419.43 519.41,418.54 520.73,417.65 522.05,416.77 523.37,415.88 524.68,415.00 526.00,414.11 527.32,413.23 528.64,412.35 529.96,411.46 531.28,410.58 532.60,409.70 533.92,408.81 535.23,407.93 536.55,407.05 537.87,406.17 539.19,405.29 540.51,404.41 541.83,403.53 543.15,402.65 544.46,401.77 545.78,400.90 547.10,400.02 548.42,399.14 549.74,398.27 551.06,397.39 552.38,396.52 553.70,395.65 555.01,394.78 556.33,393.90 557.65,393.03 558.97,392.16 560.29,391.30 561.61,390.43 562.93,389.56 564.25,388.70 565.56,387.83 566.88,386.97 568.20,386.11 569.52,385.25 570.84,384.39 572.16,383.53 573.48,382.68 574.79,381.82 576.11,380.97 577.43,380.12 578.75,379.27 580.07,378.42 581.39,377.57 582.71,376.73 584.03,375.88 585.34,375.04 586.66,374.20 587.98,373.37 589.30,372.53 590.62,371.70 591.94,370.87 593.26,370.04 594.57,369.22 595.89,368.39 597.21,367.57 598.53,366.76 599.85,365.94 601.17,365.13 602.49,364.32 603.81,363.51 605.12,362.71 606.44,361.91 607.76,361.11 609.08,360.32 610.40,359.53 611.72,358.74 613.04,357.96 614.36,357.18 615.67,356.40 616.99,355.63 618.31,354.86 619.63,354.10 620.95,353.34 622.27,352.58 623.59,351.83 624.90,351.08 626.22,350.34 627.54,349.60 628.86,348.87 630.18,348.14 631.50,347.42 632.82,346.70 634.14,345.98 635.45,345.27 636.77,344.57 638.09,343.87 639.41,343.18 640.73,342.49 642.05,341.81 643.37,341.13 644.68,340.46 646.00,339.79 647.32,339.13 648.64,338.47 649.96,337.83 651.28,337.18 652.60,336.55 653.92,335.91 655.23,335.29 656.55,334.67 657.87,334.06 659.19,333.45 660.51,332.85 661.83,332.26 663.15,331.67 664.47,331.09 665.78,330.52 667.10,329.95 668.42,329.39 669.74,328.84 671.06,328.30 672.38,327.76 673.70,327.22 675.01,326.70 676.33,326.18 677.65,325.67 678.97,325.17 680.29,324.67 681.61,324.18 682.93,323.70 684.25,323.22 685.56,322.76 686.88,322.30 688.20,321.85 689.52,321.40 690.84,320.96 692.16,320.53 693.48,320.11 694.79,319.70 696.11,319.29 697.43,318.89 698.75,318.50 700.07,318.12 701.39,317.74 702.71,317.37 704.03,317.01 705.34,316.66 706.66,316.31 707.98,315.97 709.30,315.64 710.62,315.32 711.94,315.00 713.26,314.69 714.58,314.39 715.89,314.10 717.21,313.81 718.53,313.53 719.85,313.26 721.17,312.99 722.49,312.73 723.81,312.48 725.12,312.24 726.44,312.00 727.76,311.77 729.08,311.54 730.40,311.32 731.72,311.11 733.04,310.90 734.36,310.70 735.67,310.51 736.99,310.32 738.31,310.14 739.63,309.96 740.95,309.79 742.27,309.62 743.59,309.46 744.90,309.31 746.22,309.16 747.54,309.01 748.86,308.87 750.18,308.73 751.50,308.60 752.82,308.47 754.14,308.35 755.45,308.23 756.77,308.12 758.09,308.01 759.41,307.90 760.73,307.80 762.05,307.70 763.37,307.60 764.68,307.51 766.00,307.42 767.32,307.33 768.64,307.25 769.96,307.17 771.28,307.09 772.60,307.02 773.92,306.95 775.23,306.88 776.55,306.82 777.87,306.75 779.19,306.69 780.51,306.63 781.83,306.58 783.15,306.52 784.47,306.47 785.78,306.42 787.10,306.37 788.42,306.33 789.74,306.28 791.06,306.24 792.38,306.20 793.70,306.16 795.01,306.12 796.33,306.08 797.65,306.05 798.97,306.01 800.29,305.98 801.61,305.95 802.93,305.92 804.25,305.89 805.56,305.87 806.88,305.84 808.20,305.81 809.52,305.79 810.84,305.77 812.16,305.74 813.48,305.72 814.79,305.70 816.11,305.68 817.43,305.66 818.75,305.65 820.07,305.63 821.39,305.61 822.71,305.60 824.03,305.60 825.34,305.60 826.66,305.60 827.98,305.60 829.30,305.60 830.62,305.60 831.94,305.60 833.26,305.60 834.58,305.60 835.89,305.60 837.21,305.60 838.53,305.60 839.85,305.60 841.17,305.60 842.49,305.60 843.81,305.60 845.12,305.60 846.44,305.60 847.76,305.60 849.08,305.60 850.40,305.60 851.72,305.60 853.04,305.60 854.36,305.60 855.67,305.60 856.99,305.60 858.31,305.60 859.63,305.60 860.95,305.60 862.27,305.60 863.59,305.60 864.90,305.60 866.22,305.60 867.54,305.60 868.86,305.60 870.18,305.60 871.50,305.60 872.82,305.60 874.14,305.60 875.45,305.60 876.77,305.60 878.09,305.60 879.41,305.60 880.73,305.60 882.05,305.60 883.37,305.60 884.69,305.60 886.00,305.60 887.32,305.60 888.64,305.60 889.96,305.60 891.28,305.60 892.60,305.60 893.92,305.60 895.23,305.60 896.55,305.60 897.87,305.60 899.19,305.60 900.51,305.60 901.83,305.60 903.15,305.60 904.47,305.60 905.78,305.60 907.10,305.60 908.42,305.60 909.74,305.60 911.06,305.60 912.38,305.60 913.70,305.60 915.01,305.60 916.33,305.60 917.65,305.60 918.97,305.60 920.29,305.60 921.61,305.60 922.93,305.60 924.25,305.60 925.56,305.60 926.88,305.60 928.20,305.60 929.52,305.60 930.84,305.60 932.16,305.60 933.48,305.60 934.80,305.60 936.11,305.60 937.43,305.60 938.75,305.60 940.07,305.60 941.39,305.60 942.71,305.60 944.03,305.60 945.34,305.60 946.66,305.60 947.98,305.60 949.30,305.60 950.62,305.60 951.94,305.60 953.26,305.60 954.58,305.61 955.89,305.63 957.21,305.64 958.53,305.66 959.85,305.68 961.17,305.70 962.49,305.72 963.81,305.74 965.12,305.76 966.44,305.78 967.76,305.80 969.08,305.83 970.40,305.85 971.72,305.88 973.04,305.91 974.36,305.93 975.67,305.96 976.99,305.99 978.31,306.03 979.63,306.06 980.95,306.09 982.27,306.13 983.59,306.17 984.90,306.20 986.22,306.24 987.54,306.29 988.86,306.33 990.18,306.37 991.50,306.42 992.82,306.47 994.14,306.52 995.45,306.57 996.00,306.62" fill="none" stroke="#000" stroke-width="1.15"/></svg>
<div class="a t" style="left:505.41px;top:458.27px;font-size:7.0px;line-height:7.0px;color:#000;">0.02</div>
<div class="a t" style="left:548.34px;top:458.27px;font-size:7.0px;line-height:7.0px;color:#000;">0.04</div>
<div class="a t" style="left:573.45px;top:458.27px;font-size:7.0px;line-height:7.0px;color:#000;">0.06</div>
<div class="a t" style="left:591.27px;top:458.27px;font-size:7.0px;line-height:7.0px;color:#000;">0.08</div>
<div class="a t" style="left:607.03px;top:458.27px;font-size:7.0px;line-height:7.0px;color:#000;">0.1</div>
<div class="a t" style="left:649.96px;top:458.27px;font-size:7.0px;line-height:7.0px;color:#000;">0.2</div>
<div class="a t" style="left:692.89px;top:458.27px;font-size:7.0px;line-height:7.0px;color:#000;">0.4</div>
<div class="a t" style="left:718.00px;top:458.27px;font-size:7.0px;line-height:7.0px;color:#000;">0.6</div>
<div class="a t" style="left:735.82px;top:458.27px;font-size:7.0px;line-height:7.0px;color:#000;">0.8</div>
<div class="a t" style="left:752.55px;top:458.27px;font-size:7.0px;line-height:7.0px;color:#000;">1</div>
<div class="a t" style="left:795.48px;top:458.27px;font-size:7.0px;line-height:7.0px;color:#000;">2</div>
<div class="a t" style="left:838.41px;top:458.27px;font-size:7.0px;line-height:7.0px;color:#000;">4</div>
<div class="a t" style="left:863.52px;top:458.27px;font-size:7.0px;line-height:7.0px;color:#000;">6</div>
<div class="a t" style="left:881.33px;top:458.27px;font-size:7.0px;line-height:7.0px;color:#000;">8</div>
<div class="a t" style="left:893.21px;top:458.27px;font-size:7.0px;line-height:7.0px;color:#000;">10</div>
<div class="a t" style="left:936.13px;top:458.27px;font-size:7.0px;line-height:7.0px;color:#000;">20</div>
<div class="a t" style="left:979.06px;top:458.27px;font-size:7.0px;line-height:7.0px;color:#000;">40</div>
<div class="a t" style="left:440.64px;top:306.09px;font-size:7.0px;line-height:7.0px;color:#000;">400000</div>
<div class="a t" style="left:440.64px;top:315.78px;font-size:7.0px;line-height:7.0px;color:#000;">200000</div>
<div class="a t" style="left:440.64px;top:325.47px;font-size:7.0px;line-height:7.0px;color:#000;">100000</div>
<div class="a t" style="left:444.53px;top:328.60px;font-size:7.0px;line-height:7.0px;color:#000;">80000</div>
<div class="a t" style="left:444.53px;top:332.62px;font-size:7.0px;line-height:7.0px;color:#000;">60000</div>
<div class="a t" style="left:444.53px;top:338.29px;font-size:7.0px;line-height:7.0px;color:#000;">40000</div>
<div class="a t" style="left:444.53px;top:347.98px;font-size:7.0px;line-height:7.0px;color:#000;">20000</div>
<div class="a t" style="left:444.53px;top:357.67px;font-size:7.0px;line-height:7.0px;color:#000;">10000</div>
<div class="a t" style="left:448.43px;top:360.80px;font-size:7.0px;line-height:7.0px;color:#000;">8000</div>
<div class="a t" style="left:448.43px;top:364.82px;font-size:7.0px;line-height:7.0px;color:#000;">6000</div>
<div class="a t" style="left:448.43px;top:370.49px;font-size:7.0px;line-height:7.0px;color:#000;">4000</div>
<div class="a t" style="left:448.43px;top:380.18px;font-size:7.0px;line-height:7.0px;color:#000;">2000</div>
<div class="a t" style="left:448.43px;top:389.87px;font-size:7.0px;line-height:7.0px;color:#000;">1000</div>
<div class="a t" style="left:452.32px;top:393.00px;font-size:7.0px;line-height:7.0px;color:#000;">800</div>
<div class="a t" style="left:452.32px;top:397.02px;font-size:7.0px;line-height:7.0px;color:#000;">600</div>
<div class="a t" style="left:452.32px;top:402.69px;font-size:7.0px;line-height:7.0px;color:#000;">400</div>
<div class="a t" style="left:452.32px;top:412.38px;font-size:7.0px;line-height:7.0px;color:#000;">200</div>
<div class="a t" style="left:452.32px;top:422.07px;font-size:7.0px;line-height:7.0px;color:#000;">100</div>
<div class="a t" style="left:456.21px;top:425.20px;font-size:7.0px;line-height:7.0px;color:#000;">80</div>
<div class="a t" style="left:456.21px;top:429.22px;font-size:7.0px;line-height:7.0px;color:#000;">60</div>
<div class="a t" style="left:456.21px;top:434.89px;font-size:7.0px;line-height:7.0px;color:#000;">40</div>
<div class="a t" style="left:456.21px;top:444.58px;font-size:7.0px;line-height:7.0px;color:#000;">20</div>
<div class="a t" style="left:709.70px;top:468.07px;font-size:7.0px;line-height:7.0px;color:#000;transform:scaleX(0.974);transform-origin:0 0;">Frequency (Hz)</div>
<div class="a t" style="left:416px;top:375px;font-size:7.3px;line-height:7.3px;color:#000;transform:rotate(-90deg);width:44px;text-align:center">[V/(m/s)]</div>
<div class="a" style="left:433px;top:481px;width:49px;height:12px;box-sizing:border-box;background:#fff;border-top:1px solid #a0a0a0;border-left:1px solid #a0a0a0;border-right:1px solid #fff;border-bottom:1px solid #fff;"></div>
<div class="a" style="left:434px;top:482px;width:47px;height:10px;box-sizing:border-box;border-top:1px solid #787878;border-left:1px solid #787878;border-right:1px solid #f0f0f0;border-bottom:1px solid #f0f0f0;"></div>
<div class="a t" style="left:435.20px;top:483.65px;font-size:7.5px;line-height:7.5px;color:#000;transform:scaleX(0.936);transform-origin:0 0;">Magnitude</div>
<div class="a" style="left:470px;top:482px;width:11px;height:11px;box-sizing:border-box;background:#f0f0f0;border-right:1px solid #696969;border-bottom:1px solid #696969;"></div>
<svg class="a" style="left:472.5px;top:485.8px" width="5" height="3"><path d="M0 0H5L2.5 3Z" fill="#000"/></svg>
<div class="a" style="left:891px;top:479px;width:50px;height:16px;box-sizing:border-box;background:#f0f0f0;border:1px solid #5a5a5a;"></div>
<div class="a" style="left:892px;top:480px;width:48px;height:14px;box-sizing:border-box;border-top:1px solid #fff;border-left:1px solid #fff;border-right:1px solid #a0a0a0;border-bottom:1px solid #a0a0a0;"></div>
<div class="a t" style="left:912.00px;top:483.65px;font-size:7.5px;line-height:7.5px;color:#000;transform:scaleX(0.867);transform-origin:0 0;">OK</div>
<div class="a" style="left:946px;top:479px;width:50px;height:16px;box-sizing:border-box;background:#f0f0f0;border-top:1px solid #fff;border-left:1px solid #fff;border-right:1px solid #696969;border-bottom:1px solid #696969;"></div>
<div class="a" style="left:947px;top:480px;width:48px;height:14px;box-sizing:border-box;border-right:1px solid #d8d8d8;border-bottom:1px solid #d8d8d8;"></div>
<div class="a t" style="left:960.60px;top:483.65px;font-size:7.5px;line-height:7.5px;color:#000;transform:scaleX(0.891);transform-origin:0 0;">Cancel</div>
</body></html>
